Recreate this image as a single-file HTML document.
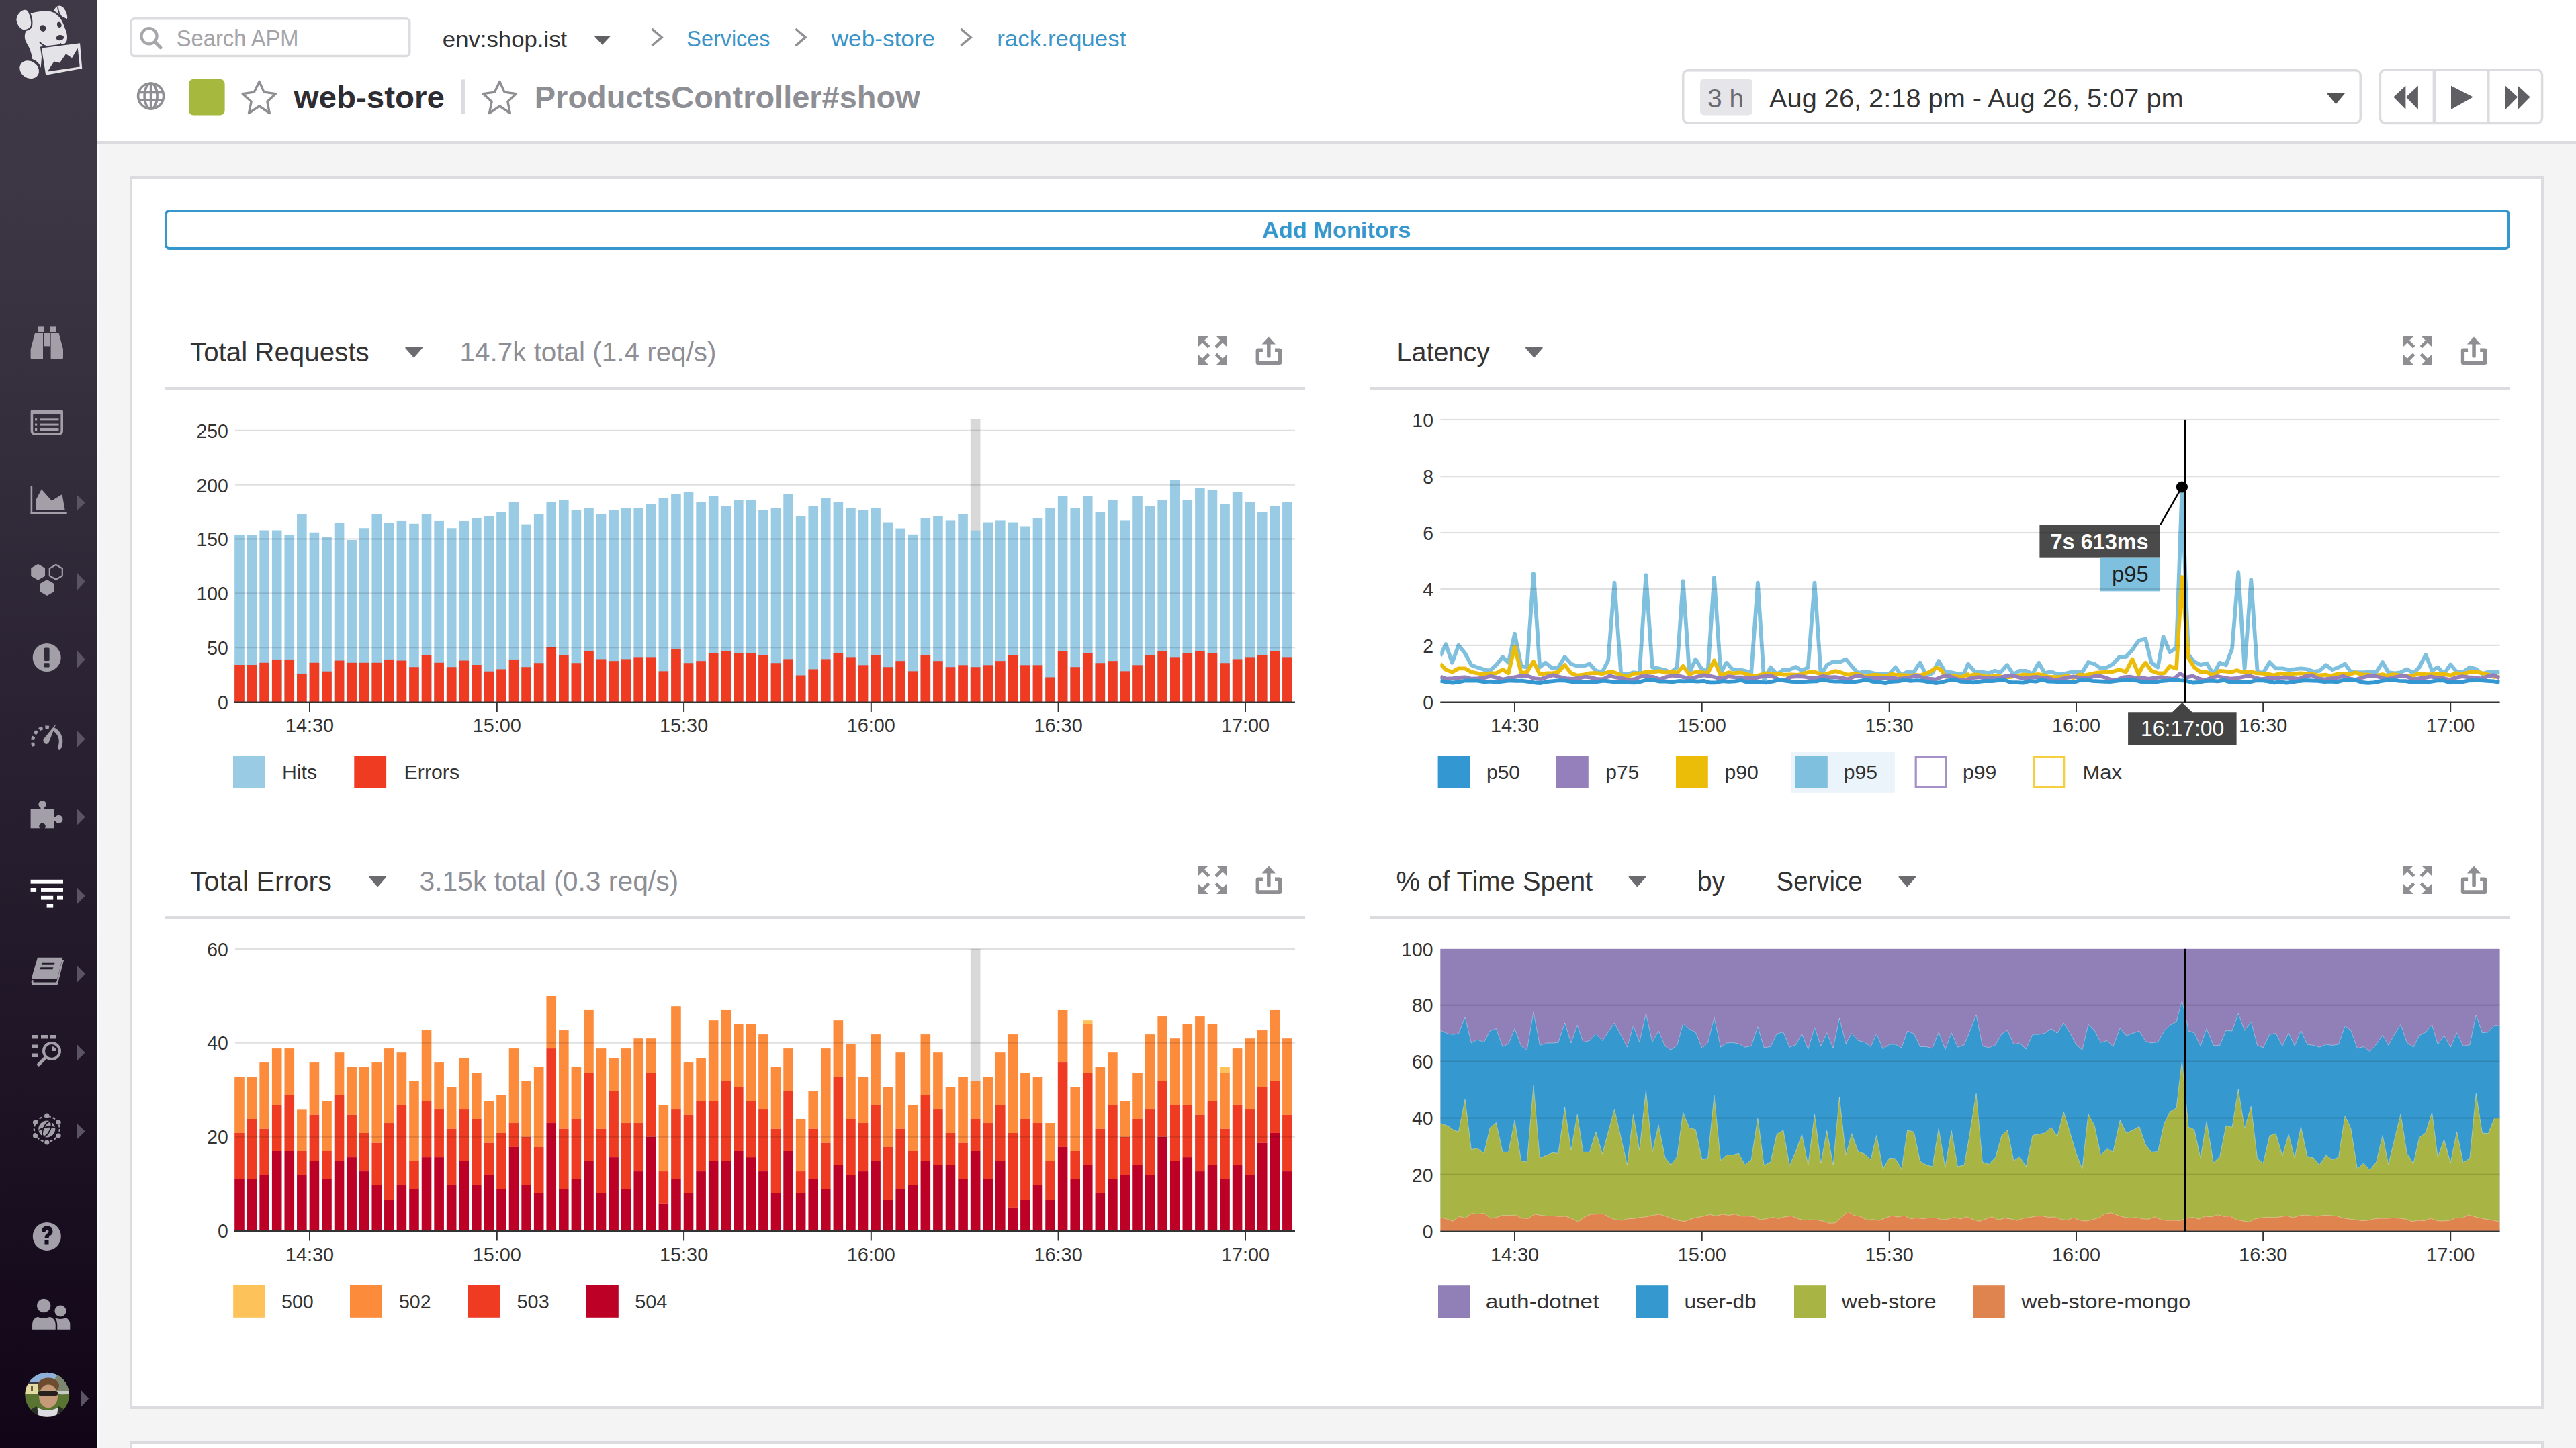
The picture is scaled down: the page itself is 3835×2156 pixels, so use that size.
<!DOCTYPE html>
<html><head><meta charset="utf-8"><title>web-store | ProductsController#show</title>
<style>html,body{margin:0;padding:0;width:3835px;height:2156px;overflow:hidden;background:#f4f4f5}svg{display:block}text{font-family:"Liberation Sans", sans-serif}</style>
</head><body>
<svg width="3835" height="2156" viewBox="0 0 3835 2156">
<rect x="0.00" y="0.00" width="3835.00" height="2156.00" fill="#f4f4f5"/>
<rect x="145.00" y="0.00" width="3690.00" height="210.00" fill="#ffffff"/>
<rect x="145.00" y="210.00" width="3690.00" height="4.00" fill="#dcdce0"/>
<rect x="193.00" y="262.00" width="3594.00" height="1836.00" fill="#dcdce0"/>
<rect x="197.00" y="266.00" width="3586.00" height="1828.00" fill="#ffffff"/>
<rect x="193.00" y="2146.00" width="3594.00" height="20.00" fill="#dcdce0"/>
<rect x="197.00" y="2150.00" width="3586.00" height="20.00" fill="#ffffff"/>
<defs><linearGradient id="sbg" x1="0" y1="0" x2="0" y2="1"><stop offset="0" stop-color="#3f3947"/><stop offset="0.12" stop-color="#3d3745"/><stop offset="0.5" stop-color="#2a2232"/><stop offset="1" stop-color="#110517"/></linearGradient><radialGradient id="avg" cx="0.5" cy="0.45" r="0.6"><stop offset="0" stop-color="#d9a98a"/><stop offset="0.45" stop-color="#b88a6a"/><stop offset="0.7" stop-color="#6d8a3a"/><stop offset="1" stop-color="#4a6a2a"/></radialGradient></defs>
<rect x="0.00" y="0.00" width="145.00" height="2156.00" fill="url(#sbg)"/>
<rect x="145.00" y="214.00" width="3.00" height="1942.00" fill="#ffffff" opacity="0.6"/>
<rect x="195.2" y="27.7" width="414.6" height="55.8" rx="5" fill="#fff" stroke="#dcdce0" stroke-width="3.4"/>
<circle cx="222" cy="53.7" r="11.6" fill="none" stroke="#a6a6ab" stroke-width="4.2"/>
<line x1="231" y1="62.7" x2="239" y2="70.7" stroke="#a6a6ab" stroke-width="5" stroke-linecap="round"/>
<text x="262.8" y="69.0" font-size="35" fill="#a3a3a8" font-weight="400" text-anchor="start" textLength="181.7" lengthAdjust="spacingAndGlyphs">Search APM</text>
<text x="658.8" y="69.5" font-size="34" fill="#333" font-weight="400" text-anchor="start" textLength="185.5" lengthAdjust="spacingAndGlyphs">env:shop.ist</text>
<path d="M886 54 L907.5 54 L896.7 65.5 Z" fill="#616165" stroke="#616165" stroke-width="1.8" stroke-linejoin="round"/>
<path d="M970.5 43 L985.0 55.5 L970.5 68" fill="none" stroke="#909095" stroke-width="3.6"/>
<path d="M1184.5 43 L1199.0 55.5 L1184.5 68" fill="none" stroke="#909095" stroke-width="3.6"/>
<path d="M1430.5 43 L1445.0 55.5 L1430.5 68" fill="none" stroke="#909095" stroke-width="3.6"/>
<text x="1022.3" y="69.0" font-size="34" fill="#3a94c8" font-weight="400" text-anchor="start" textLength="124.2" lengthAdjust="spacingAndGlyphs">Services</text>
<text x="1237.7" y="69.0" font-size="34" fill="#3a94c8" font-weight="400" text-anchor="start" textLength="154.5" lengthAdjust="spacingAndGlyphs">web-store</text>
<text x="1484.2" y="69.0" font-size="34" fill="#3a94c8" font-weight="400" text-anchor="start" textLength="192.2" lengthAdjust="spacingAndGlyphs">rack.request</text>
<g fill="none" stroke="#8e8e93" stroke-width="3.6"><circle cx="224.6" cy="143" r="19"/><ellipse cx="224.6" cy="143" rx="9.5" ry="19"/><line x1="224.6" y1="124" x2="224.6" y2="162"/><line x1="207" y1="137.5" x2="242" y2="137.5"/><line x1="207" y1="149" x2="242" y2="149"/></g>
<rect x="281" y="117.8" width="53.6" height="53.8" rx="7" fill="#a6b83e"/>
<polygon points="386.0,121.4 393.0,137.1 410.5,139.6 397.9,151.3 401.3,168.5 386.0,158.0 370.5,168.5 374.1,151.3 361.1,139.6 378.4,137.1" fill="none" stroke="#8e8e93" stroke-width="3.4" stroke-linejoin="round"/>
<polygon points="744.0,121.4 751.0,137.1 768.5,139.6 755.9,151.3 759.3,168.5 744.0,158.0 728.5,168.5 732.1,151.3 719.1,139.6 736.4,137.1" fill="none" stroke="#8e8e93" stroke-width="3.4" stroke-linejoin="round"/>
<text x="437.5" y="161.0" font-size="46" fill="#2d2d33" font-weight="700" text-anchor="start" textLength="224.4" lengthAdjust="spacingAndGlyphs">web-store</text>
<rect x="686.30" y="118.40" width="6.50" height="51.20" fill="#dcdce0"/>
<text x="795.8" y="161.0" font-size="46" fill="#8e8e95" font-weight="700" text-anchor="start" textLength="573.9" lengthAdjust="spacingAndGlyphs">ProductsController#show</text>
<rect x="2505.7" y="104.7" width="1008.5" height="78" rx="7" fill="#fff" stroke="#dcdce0" stroke-width="3.5"/>
<rect x="2531" y="117.4" width="78" height="54" rx="6" fill="#e6e6ea"/>
<text x="2542.0" y="160.3" font-size="38" fill="#6a6a70" font-weight="400" text-anchor="start" textLength="54" lengthAdjust="spacingAndGlyphs">3 h</text>
<text x="2634.0" y="160.3" font-size="38" fill="#333" font-weight="400" text-anchor="start" textLength="616.7" lengthAdjust="spacingAndGlyphs">Aug 26, 2:18 pm - Aug 26, 5:07 pm</text>
<path d="M3465 139 L3490 139 L3477.5 154 Z" fill="#555" stroke="#555" stroke-width="1.5" stroke-linejoin="round"/>
<rect x="3543.4" y="103.8" width="241.2" height="79.7" rx="8" fill="#fff" stroke="#dcdce0" stroke-width="3.5"/>
<rect x="3621.60" y="105.00" width="4.50" height="78.00" fill="#dcdce0"/>
<rect x="3703.00" y="105.00" width="3.60" height="78.00" fill="#dcdce0"/>
<path d="M3563.3 144.5 L3581.4 127.8 L3581.4 163.1 Z M3581.9 144.5 L3599.9 127.8 L3599.9 163.1 Z" fill="#5f5f64"/>
<path d="M3649 127.8 L3681.9 144.5 L3649 163.1 Z" fill="#5f5f64"/>
<path d="M3730 127.8 L3748.2 144.5 L3730 163.1 Z M3748.5 127.8 L3766.6 144.5 L3748.5 163.1 Z" fill="#5f5f64"/>
<rect x="247" y="314" width="3488" height="56" rx="5" fill="#fff" stroke="#3597cc" stroke-width="4"/>
<text x="1879.0" y="354.2" font-size="34" fill="#3597cc" font-weight="700" text-anchor="start" textLength="221.3" lengthAdjust="spacingAndGlyphs">Add Monitors</text>
<text x="283.0" y="537.8" font-size="40" fill="#333" font-weight="400" text-anchor="start" textLength="266.6" lengthAdjust="spacingAndGlyphs">Total Requests</text>
<path d="M604 517.8 L628.3 517.8 L616.15 531.5 Z" fill="#6b6b70" stroke="#6b6b70" stroke-width="1.6" stroke-linejoin="round"/>
<text x="684.5" y="537.8" font-size="40" fill="#8e8e95" font-weight="400" text-anchor="start" textLength="382" lengthAdjust="spacingAndGlyphs">14.7k total (1.4 req/s)</text>
<g fill="#8e8e93"><polygon points="1784.00,501.00 1799.00,501.00 1793.15,506.85 1801.40,515.10 1798.10,518.40 1789.85,510.15 1784.00,516.00"/><polygon points="1826.00,501.00 1811.00,501.00 1816.85,506.85 1808.60,515.10 1811.90,518.40 1820.15,510.15 1826.00,516.00"/><polygon points="1784.00,543.00 1799.00,543.00 1793.15,537.15 1801.40,528.90 1798.10,525.60 1789.85,533.85 1784.00,528.00"/><polygon points="1826.00,543.00 1811.00,543.00 1816.85,537.15 1808.60,528.90 1811.90,525.60 1820.15,533.85 1826.00,528.00"/></g>
<g fill="#8e8e93"><path d="M1879.8999999999999 518.5 H1873.1 Q1869.6 518.5 1869.6 522 V539.5 Q1869.6 543 1873.1 543 H1904.8 Q1908.3 543 1908.3 539.5 V522 Q1908.3 518.5 1904.8 518.5 H1898.0 V524 H1902.8 V537.3 H1874.8999999999999 V524 H1879.8999999999999 Z"/><path d="M1888.8 501.4 L1898.8999999999999 512.6 H1891.6 V530.5 Q1891.6 532.5 1888.85 532.5 Q1886.1 532.5 1886.1 530.5 V512.6 H1878.6 Z"/></g>
<rect x="245.00" y="576.00" width="1698.00" height="4.00" fill="#dcdce0"/>
<text x="2079.5" y="537.8" font-size="40" fill="#333" font-weight="400" text-anchor="start" textLength="138.4" lengthAdjust="spacingAndGlyphs">Latency</text>
<path d="M2271.7 517.8 L2296.0 517.8 L2283.85 531.5 Z" fill="#6b6b70" stroke="#6b6b70" stroke-width="1.6" stroke-linejoin="round"/>
<g fill="#8e8e93"><polygon points="3578.00,501.00 3593.00,501.00 3587.15,506.85 3595.40,515.10 3592.10,518.40 3583.85,510.15 3578.00,516.00"/><polygon points="3620.00,501.00 3605.00,501.00 3610.85,506.85 3602.60,515.10 3605.90,518.40 3614.15,510.15 3620.00,516.00"/><polygon points="3578.00,543.00 3593.00,543.00 3587.15,537.15 3595.40,528.90 3592.10,525.60 3583.85,533.85 3578.00,528.00"/><polygon points="3620.00,543.00 3605.00,543.00 3610.85,537.15 3602.60,528.90 3605.90,525.60 3614.15,533.85 3620.00,528.00"/></g>
<g fill="#8e8e93"><path d="M3674.1000000000004 518.5 H3667.3 Q3663.8 518.5 3663.8 522 V539.5 Q3663.8 543 3667.3 543 H3699.0 Q3702.5 543 3702.5 539.5 V522 Q3702.5 518.5 3699.0 518.5 H3692.2000000000003 V524 H3697.0 V537.3 H3669.1000000000004 V524 H3674.1000000000004 Z"/><path d="M3683.0 501.4 L3693.1000000000004 512.6 H3685.8 V530.5 Q3685.8 532.5 3683.05 532.5 Q3680.3 532.5 3680.3 530.5 V512.6 H3672.8 Z"/></g>
<rect x="2039.00" y="576.00" width="1698.00" height="4.00" fill="#dcdce0"/>
<text x="282.9" y="1325.8" font-size="40" fill="#333" font-weight="400" text-anchor="start" textLength="211" lengthAdjust="spacingAndGlyphs">Total Errors</text>
<path d="M550 1305.8 L574.3 1305.8 L562.15 1319.5 Z" fill="#6b6b70" stroke="#6b6b70" stroke-width="1.6" stroke-linejoin="round"/>
<text x="624.5" y="1325.8" font-size="40" fill="#8e8e95" font-weight="400" text-anchor="start" textLength="385.7" lengthAdjust="spacingAndGlyphs">3.15k total (0.3 req/s)</text>
<g fill="#8e8e93"><polygon points="1784.00,1289.00 1799.00,1289.00 1793.15,1294.85 1801.40,1303.10 1798.10,1306.40 1789.85,1298.15 1784.00,1304.00"/><polygon points="1826.00,1289.00 1811.00,1289.00 1816.85,1294.85 1808.60,1303.10 1811.90,1306.40 1820.15,1298.15 1826.00,1304.00"/><polygon points="1784.00,1331.00 1799.00,1331.00 1793.15,1325.15 1801.40,1316.90 1798.10,1313.60 1789.85,1321.85 1784.00,1316.00"/><polygon points="1826.00,1331.00 1811.00,1331.00 1816.85,1325.15 1808.60,1316.90 1811.90,1313.60 1820.15,1321.85 1826.00,1316.00"/></g>
<g fill="#8e8e93"><path d="M1879.8999999999999 1306.5 H1873.1 Q1869.6 1306.5 1869.6 1310 V1327.5 Q1869.6 1331 1873.1 1331 H1904.8 Q1908.3 1331 1908.3 1327.5 V1310 Q1908.3 1306.5 1904.8 1306.5 H1898.0 V1312 H1902.8 V1325.3 H1874.8999999999999 V1312 H1879.8999999999999 Z"/><path d="M1888.8 1289.4 L1898.8999999999999 1300.6 H1891.6 V1318.5 Q1891.6 1320.5 1888.85 1320.5 Q1886.1 1320.5 1886.1 1318.5 V1300.6 H1878.6 Z"/></g>
<rect x="245.00" y="1364.00" width="1698.00" height="4.00" fill="#dcdce0"/>
<text x="2078.4" y="1325.7" font-size="40" fill="#333" font-weight="400" text-anchor="start" textLength="292.8" lengthAdjust="spacingAndGlyphs">% of Time Spent</text>
<path d="M2425.3 1305.8 L2449.6000000000004 1305.8 L2437.4500000000003 1319.5 Z" fill="#6b6b70" stroke="#6b6b70" stroke-width="1.6" stroke-linejoin="round"/>
<text x="2526.7" y="1325.7" font-size="40" fill="#333" font-weight="400" text-anchor="start" textLength="41.6" lengthAdjust="spacingAndGlyphs">by</text>
<text x="2644.5" y="1325.7" font-size="40" fill="#333" font-weight="400" text-anchor="start" textLength="128.2" lengthAdjust="spacingAndGlyphs">Service</text>
<path d="M2827.2 1305.8 L2851.5 1305.8 L2839.35 1319.5 Z" fill="#6b6b70" stroke="#6b6b70" stroke-width="1.6" stroke-linejoin="round"/>
<g fill="#8e8e93"><polygon points="3578.00,1289.00 3593.00,1289.00 3587.15,1294.85 3595.40,1303.10 3592.10,1306.40 3583.85,1298.15 3578.00,1304.00"/><polygon points="3620.00,1289.00 3605.00,1289.00 3610.85,1294.85 3602.60,1303.10 3605.90,1306.40 3614.15,1298.15 3620.00,1304.00"/><polygon points="3578.00,1331.00 3593.00,1331.00 3587.15,1325.15 3595.40,1316.90 3592.10,1313.60 3583.85,1321.85 3578.00,1316.00"/><polygon points="3620.00,1331.00 3605.00,1331.00 3610.85,1325.15 3602.60,1316.90 3605.90,1313.60 3614.15,1321.85 3620.00,1316.00"/></g>
<g fill="#8e8e93"><path d="M3674.1000000000004 1306.5 H3667.3 Q3663.8 1306.5 3663.8 1310 V1327.5 Q3663.8 1331 3667.3 1331 H3699.0 Q3702.5 1331 3702.5 1327.5 V1310 Q3702.5 1306.5 3699.0 1306.5 H3692.2000000000003 V1312 H3697.0 V1325.3 H3669.1000000000004 V1312 H3674.1000000000004 Z"/><path d="M3683.0 1289.4 L3693.1000000000004 1300.6 H3685.8 V1318.5 Q3685.8 1320.5 3683.05 1320.5 Q3680.3 1320.5 3680.3 1318.5 V1300.6 H3672.8 Z"/></g>
<rect x="2039.00" y="1364.00" width="1698.00" height="4.00" fill="#dcdce0"/>
<rect x="1444.83" y="624.00" width="14.60" height="421.00" fill="#d8d8d8"/>
<rect x="349.20" y="795.95" width="14.60" height="249.05" fill="#99cbe5"/>
<rect x="349.20" y="990.02" width="14.60" height="54.98" fill="#ef3b22"/>
<rect x="367.77" y="795.95" width="14.60" height="249.05" fill="#99cbe5"/>
<rect x="367.77" y="990.02" width="14.60" height="54.98" fill="#ef3b22"/>
<rect x="386.34" y="789.48" width="14.60" height="255.52" fill="#99cbe5"/>
<rect x="386.34" y="986.78" width="14.60" height="58.22" fill="#ef3b22"/>
<rect x="404.91" y="789.48" width="14.60" height="255.52" fill="#99cbe5"/>
<rect x="404.91" y="981.93" width="14.60" height="63.07" fill="#ef3b22"/>
<rect x="423.48" y="795.95" width="14.60" height="249.05" fill="#99cbe5"/>
<rect x="423.48" y="981.93" width="14.60" height="63.07" fill="#ef3b22"/>
<rect x="442.05" y="765.22" width="14.60" height="279.78" fill="#99cbe5"/>
<rect x="442.05" y="1002.95" width="14.60" height="42.05" fill="#ef3b22"/>
<rect x="460.62" y="792.72" width="14.60" height="252.28" fill="#99cbe5"/>
<rect x="460.62" y="986.78" width="14.60" height="58.22" fill="#ef3b22"/>
<rect x="479.19" y="799.19" width="14.60" height="245.81" fill="#99cbe5"/>
<rect x="479.19" y="999.72" width="14.60" height="45.28" fill="#ef3b22"/>
<rect x="497.76" y="778.16" width="14.60" height="266.84" fill="#99cbe5"/>
<rect x="497.76" y="983.55" width="14.60" height="61.45" fill="#ef3b22"/>
<rect x="516.33" y="804.04" width="14.60" height="240.96" fill="#99cbe5"/>
<rect x="516.33" y="986.78" width="14.60" height="58.22" fill="#ef3b22"/>
<rect x="534.90" y="786.25" width="14.60" height="258.75" fill="#99cbe5"/>
<rect x="534.90" y="986.78" width="14.60" height="58.22" fill="#ef3b22"/>
<rect x="553.47" y="765.22" width="14.60" height="279.78" fill="#99cbe5"/>
<rect x="553.47" y="986.78" width="14.60" height="58.22" fill="#ef3b22"/>
<rect x="572.04" y="778.16" width="14.60" height="266.84" fill="#99cbe5"/>
<rect x="572.04" y="981.93" width="14.60" height="63.07" fill="#ef3b22"/>
<rect x="590.61" y="774.93" width="14.60" height="270.07" fill="#99cbe5"/>
<rect x="590.61" y="983.55" width="14.60" height="61.45" fill="#ef3b22"/>
<rect x="609.18" y="779.78" width="14.60" height="265.22" fill="#99cbe5"/>
<rect x="609.18" y="993.25" width="14.60" height="51.75" fill="#ef3b22"/>
<rect x="627.75" y="765.22" width="14.60" height="279.78" fill="#99cbe5"/>
<rect x="627.75" y="975.46" width="14.60" height="69.54" fill="#ef3b22"/>
<rect x="646.32" y="774.93" width="14.60" height="270.07" fill="#99cbe5"/>
<rect x="646.32" y="986.78" width="14.60" height="58.22" fill="#ef3b22"/>
<rect x="664.89" y="786.25" width="14.60" height="258.75" fill="#99cbe5"/>
<rect x="664.89" y="993.25" width="14.60" height="51.75" fill="#ef3b22"/>
<rect x="683.46" y="774.93" width="14.60" height="270.07" fill="#99cbe5"/>
<rect x="683.46" y="983.55" width="14.60" height="61.45" fill="#ef3b22"/>
<rect x="702.03" y="771.69" width="14.60" height="273.31" fill="#99cbe5"/>
<rect x="702.03" y="990.02" width="14.60" height="54.98" fill="#ef3b22"/>
<rect x="720.60" y="768.46" width="14.60" height="276.54" fill="#99cbe5"/>
<rect x="720.60" y="999.72" width="14.60" height="45.28" fill="#ef3b22"/>
<rect x="739.17" y="762.64" width="14.60" height="282.36" fill="#99cbe5"/>
<rect x="739.17" y="996.48" width="14.60" height="48.52" fill="#ef3b22"/>
<rect x="757.74" y="747.44" width="14.60" height="297.56" fill="#99cbe5"/>
<rect x="757.74" y="981.93" width="14.60" height="63.07" fill="#ef3b22"/>
<rect x="776.31" y="780.59" width="14.60" height="264.41" fill="#99cbe5"/>
<rect x="776.31" y="993.25" width="14.60" height="51.75" fill="#ef3b22"/>
<rect x="794.88" y="765.71" width="14.60" height="279.29" fill="#99cbe5"/>
<rect x="794.88" y="987.27" width="14.60" height="57.73" fill="#ef3b22"/>
<rect x="813.45" y="747.44" width="14.60" height="297.56" fill="#99cbe5"/>
<rect x="813.45" y="963.17" width="14.60" height="81.83" fill="#ef3b22"/>
<rect x="832.02" y="744.20" width="14.60" height="300.80" fill="#99cbe5"/>
<rect x="832.02" y="975.46" width="14.60" height="69.54" fill="#ef3b22"/>
<rect x="850.59" y="759.56" width="14.60" height="285.44" fill="#99cbe5"/>
<rect x="850.59" y="987.27" width="14.60" height="57.73" fill="#ef3b22"/>
<rect x="869.16" y="756.49" width="14.60" height="288.51" fill="#99cbe5"/>
<rect x="869.16" y="969.32" width="14.60" height="75.68" fill="#ef3b22"/>
<rect x="887.73" y="765.71" width="14.60" height="279.29" fill="#99cbe5"/>
<rect x="887.73" y="981.44" width="14.60" height="63.56" fill="#ef3b22"/>
<rect x="906.30" y="759.56" width="14.60" height="285.44" fill="#99cbe5"/>
<rect x="906.30" y="984.19" width="14.60" height="60.81" fill="#ef3b22"/>
<rect x="924.87" y="756.49" width="14.60" height="288.51" fill="#99cbe5"/>
<rect x="924.87" y="981.44" width="14.60" height="63.56" fill="#ef3b22"/>
<rect x="943.44" y="756.49" width="14.60" height="288.51" fill="#99cbe5"/>
<rect x="943.44" y="978.37" width="14.60" height="66.63" fill="#ef3b22"/>
<rect x="962.01" y="750.67" width="14.60" height="294.33" fill="#99cbe5"/>
<rect x="962.01" y="978.37" width="14.60" height="66.63" fill="#ef3b22"/>
<rect x="980.58" y="741.29" width="14.60" height="303.71" fill="#99cbe5"/>
<rect x="980.58" y="999.39" width="14.60" height="45.61" fill="#ef3b22"/>
<rect x="999.15" y="735.31" width="14.60" height="309.69" fill="#99cbe5"/>
<rect x="999.15" y="966.24" width="14.60" height="78.76" fill="#ef3b22"/>
<rect x="1017.72" y="732.56" width="14.60" height="312.44" fill="#99cbe5"/>
<rect x="1017.72" y="987.27" width="14.60" height="57.73" fill="#ef3b22"/>
<rect x="1036.29" y="747.44" width="14.60" height="297.56" fill="#99cbe5"/>
<rect x="1036.29" y="984.19" width="14.60" height="60.81" fill="#ef3b22"/>
<rect x="1054.86" y="738.22" width="14.60" height="306.78" fill="#99cbe5"/>
<rect x="1054.86" y="972.23" width="14.60" height="72.77" fill="#ef3b22"/>
<rect x="1073.43" y="753.42" width="14.60" height="291.58" fill="#99cbe5"/>
<rect x="1073.43" y="969.32" width="14.60" height="75.68" fill="#ef3b22"/>
<rect x="1092.00" y="744.20" width="14.60" height="300.80" fill="#99cbe5"/>
<rect x="1092.00" y="972.23" width="14.60" height="72.77" fill="#ef3b22"/>
<rect x="1110.57" y="744.20" width="14.60" height="300.80" fill="#99cbe5"/>
<rect x="1110.57" y="972.23" width="14.60" height="72.77" fill="#ef3b22"/>
<rect x="1129.14" y="759.56" width="14.60" height="285.44" fill="#99cbe5"/>
<rect x="1129.14" y="975.46" width="14.60" height="69.54" fill="#ef3b22"/>
<rect x="1147.71" y="756.49" width="14.60" height="288.51" fill="#99cbe5"/>
<rect x="1147.71" y="987.27" width="14.60" height="57.73" fill="#ef3b22"/>
<rect x="1166.28" y="735.31" width="14.60" height="309.69" fill="#99cbe5"/>
<rect x="1166.28" y="981.44" width="14.60" height="63.56" fill="#ef3b22"/>
<rect x="1184.85" y="768.62" width="14.60" height="276.38" fill="#99cbe5"/>
<rect x="1184.85" y="1005.54" width="14.60" height="39.46" fill="#ef3b22"/>
<rect x="1203.42" y="753.42" width="14.60" height="291.58" fill="#99cbe5"/>
<rect x="1203.42" y="996.48" width="14.60" height="48.52" fill="#ef3b22"/>
<rect x="1221.99" y="741.29" width="14.60" height="303.71" fill="#99cbe5"/>
<rect x="1221.99" y="981.44" width="14.60" height="63.56" fill="#ef3b22"/>
<rect x="1240.56" y="747.44" width="14.60" height="297.56" fill="#99cbe5"/>
<rect x="1240.56" y="972.23" width="14.60" height="72.77" fill="#ef3b22"/>
<rect x="1259.13" y="756.49" width="14.60" height="288.51" fill="#99cbe5"/>
<rect x="1259.13" y="978.37" width="14.60" height="66.63" fill="#ef3b22"/>
<rect x="1277.70" y="759.56" width="14.60" height="285.44" fill="#99cbe5"/>
<rect x="1277.70" y="990.34" width="14.60" height="54.66" fill="#ef3b22"/>
<rect x="1296.27" y="756.49" width="14.60" height="288.51" fill="#99cbe5"/>
<rect x="1296.27" y="975.46" width="14.60" height="69.54" fill="#ef3b22"/>
<rect x="1314.84" y="777.52" width="14.60" height="267.48" fill="#99cbe5"/>
<rect x="1314.84" y="993.25" width="14.60" height="51.75" fill="#ef3b22"/>
<rect x="1333.41" y="786.57" width="14.60" height="258.43" fill="#99cbe5"/>
<rect x="1333.41" y="984.19" width="14.60" height="60.81" fill="#ef3b22"/>
<rect x="1351.98" y="795.79" width="14.60" height="249.21" fill="#99cbe5"/>
<rect x="1351.98" y="999.39" width="14.60" height="45.61" fill="#ef3b22"/>
<rect x="1370.55" y="771.37" width="14.60" height="273.63" fill="#99cbe5"/>
<rect x="1370.55" y="975.46" width="14.60" height="69.54" fill="#ef3b22"/>
<rect x="1389.12" y="768.62" width="14.60" height="276.38" fill="#99cbe5"/>
<rect x="1389.12" y="984.19" width="14.60" height="60.81" fill="#ef3b22"/>
<rect x="1407.69" y="774.44" width="14.60" height="270.56" fill="#99cbe5"/>
<rect x="1407.69" y="993.25" width="14.60" height="51.75" fill="#ef3b22"/>
<rect x="1426.26" y="765.71" width="14.60" height="279.29" fill="#99cbe5"/>
<rect x="1426.26" y="990.34" width="14.60" height="54.66" fill="#ef3b22"/>
<rect x="1444.83" y="789.64" width="14.60" height="255.36" fill="#99cbe5"/>
<rect x="1444.83" y="993.25" width="14.60" height="51.75" fill="#ef3b22"/>
<rect x="1463.40" y="777.52" width="14.60" height="267.48" fill="#99cbe5"/>
<rect x="1463.40" y="990.34" width="14.60" height="54.66" fill="#ef3b22"/>
<rect x="1481.97" y="774.44" width="14.60" height="270.56" fill="#99cbe5"/>
<rect x="1481.97" y="984.19" width="14.60" height="60.81" fill="#ef3b22"/>
<rect x="1500.54" y="777.52" width="14.60" height="267.48" fill="#99cbe5"/>
<rect x="1500.54" y="975.46" width="14.60" height="69.54" fill="#ef3b22"/>
<rect x="1519.11" y="783.50" width="14.60" height="261.50" fill="#99cbe5"/>
<rect x="1519.11" y="990.34" width="14.60" height="54.66" fill="#ef3b22"/>
<rect x="1537.68" y="771.37" width="14.60" height="273.63" fill="#99cbe5"/>
<rect x="1537.68" y="990.34" width="14.60" height="54.66" fill="#ef3b22"/>
<rect x="1556.25" y="756.49" width="14.60" height="288.51" fill="#99cbe5"/>
<rect x="1556.25" y="1008.45" width="14.60" height="36.55" fill="#ef3b22"/>
<rect x="1574.82" y="738.22" width="14.60" height="306.78" fill="#99cbe5"/>
<rect x="1574.82" y="969.32" width="14.60" height="75.68" fill="#ef3b22"/>
<rect x="1593.39" y="756.49" width="14.60" height="288.51" fill="#99cbe5"/>
<rect x="1593.39" y="993.25" width="14.60" height="51.75" fill="#ef3b22"/>
<rect x="1611.96" y="738.22" width="14.60" height="306.78" fill="#99cbe5"/>
<rect x="1611.96" y="972.23" width="14.60" height="72.77" fill="#ef3b22"/>
<rect x="1630.53" y="762.64" width="14.60" height="282.36" fill="#99cbe5"/>
<rect x="1630.53" y="987.27" width="14.60" height="57.73" fill="#ef3b22"/>
<rect x="1649.10" y="744.20" width="14.60" height="300.80" fill="#99cbe5"/>
<rect x="1649.10" y="984.19" width="14.60" height="60.81" fill="#ef3b22"/>
<rect x="1667.67" y="774.44" width="14.60" height="270.56" fill="#99cbe5"/>
<rect x="1667.67" y="999.39" width="14.60" height="45.61" fill="#ef3b22"/>
<rect x="1686.24" y="738.22" width="14.60" height="306.78" fill="#99cbe5"/>
<rect x="1686.24" y="990.34" width="14.60" height="54.66" fill="#ef3b22"/>
<rect x="1704.81" y="753.42" width="14.60" height="291.58" fill="#99cbe5"/>
<rect x="1704.81" y="975.46" width="14.60" height="69.54" fill="#ef3b22"/>
<rect x="1723.38" y="744.20" width="14.60" height="300.80" fill="#99cbe5"/>
<rect x="1723.38" y="969.32" width="14.60" height="75.68" fill="#ef3b22"/>
<rect x="1741.95" y="714.61" width="14.60" height="330.39" fill="#99cbe5"/>
<rect x="1741.95" y="978.37" width="14.60" height="66.63" fill="#ef3b22"/>
<rect x="1760.52" y="744.20" width="14.60" height="300.80" fill="#99cbe5"/>
<rect x="1760.52" y="972.23" width="14.60" height="72.77" fill="#ef3b22"/>
<rect x="1779.09" y="726.41" width="14.60" height="318.59" fill="#99cbe5"/>
<rect x="1779.09" y="969.32" width="14.60" height="75.68" fill="#ef3b22"/>
<rect x="1797.66" y="729.48" width="14.60" height="315.52" fill="#99cbe5"/>
<rect x="1797.66" y="972.23" width="14.60" height="72.77" fill="#ef3b22"/>
<rect x="1816.23" y="750.51" width="14.60" height="294.49" fill="#99cbe5"/>
<rect x="1816.23" y="987.27" width="14.60" height="57.73" fill="#ef3b22"/>
<rect x="1834.80" y="732.56" width="14.60" height="312.44" fill="#99cbe5"/>
<rect x="1834.80" y="981.44" width="14.60" height="63.56" fill="#ef3b22"/>
<rect x="1853.37" y="747.44" width="14.60" height="297.56" fill="#99cbe5"/>
<rect x="1853.37" y="978.37" width="14.60" height="66.63" fill="#ef3b22"/>
<rect x="1871.94" y="762.64" width="14.60" height="282.36" fill="#99cbe5"/>
<rect x="1871.94" y="975.46" width="14.60" height="69.54" fill="#ef3b22"/>
<rect x="1890.51" y="753.42" width="14.60" height="291.58" fill="#99cbe5"/>
<rect x="1890.51" y="969.32" width="14.60" height="75.68" fill="#ef3b22"/>
<rect x="1909.08" y="747.44" width="14.60" height="297.56" fill="#99cbe5"/>
<rect x="1909.08" y="978.37" width="14.60" height="66.63" fill="#ef3b22"/>
<rect x="350.00" y="639.70" width="1578.00" height="2.20" fill="rgba(0,0,0,0.12)"/>
<rect x="350.00" y="720.60" width="1578.00" height="2.20" fill="rgba(0,0,0,0.12)"/>
<rect x="350.00" y="801.40" width="1578.00" height="2.20" fill="rgba(0,0,0,0.12)"/>
<rect x="350.00" y="882.30" width="1578.00" height="2.20" fill="rgba(0,0,0,0.12)"/>
<rect x="350.00" y="963.10" width="1578.00" height="2.20" fill="rgba(0,0,0,0.12)"/>
<text x="339.7" y="651.6" font-size="30" fill="#333" font-weight="400" text-anchor="end" textLength="47.31" lengthAdjust="spacingAndGlyphs">250</text>
<text x="339.7" y="732.5" font-size="30" fill="#333" font-weight="400" text-anchor="end" textLength="47.31" lengthAdjust="spacingAndGlyphs">200</text>
<text x="339.7" y="813.2" font-size="30" fill="#333" font-weight="400" text-anchor="end" textLength="47.31" lengthAdjust="spacingAndGlyphs">150</text>
<text x="339.7" y="894.1" font-size="30" fill="#333" font-weight="400" text-anchor="end" textLength="47.31" lengthAdjust="spacingAndGlyphs">100</text>
<text x="339.7" y="975.0" font-size="30" fill="#333" font-weight="400" text-anchor="end" textLength="31.54" lengthAdjust="spacingAndGlyphs">50</text>
<text x="339.7" y="1055.8" font-size="30" fill="#333" font-weight="400" text-anchor="end" textLength="15.77" lengthAdjust="spacingAndGlyphs">0</text>
<rect x="349.00" y="1044.50" width="1579.00" height="2.00" fill="#333"/>
<rect x="460.00" y="1045.50" width="2.00" height="14.50" fill="#333"/>
<text x="461.0" y="1089.7" font-size="30" fill="#333" font-weight="400" text-anchor="middle" textLength="72.17999999999999" lengthAdjust="spacingAndGlyphs">14:30</text>
<rect x="738.80" y="1045.50" width="2.00" height="14.50" fill="#333"/>
<text x="739.8" y="1089.7" font-size="30" fill="#333" font-weight="400" text-anchor="middle" textLength="72.17999999999999" lengthAdjust="spacingAndGlyphs">15:00</text>
<rect x="1017.10" y="1045.50" width="2.00" height="14.50" fill="#333"/>
<text x="1018.1" y="1089.7" font-size="30" fill="#333" font-weight="400" text-anchor="middle" textLength="72.17999999999999" lengthAdjust="spacingAndGlyphs">15:30</text>
<rect x="1295.80" y="1045.50" width="2.00" height="14.50" fill="#333"/>
<text x="1296.8" y="1089.7" font-size="30" fill="#333" font-weight="400" text-anchor="middle" textLength="72.17999999999999" lengthAdjust="spacingAndGlyphs">16:00</text>
<rect x="1574.60" y="1045.50" width="2.00" height="14.50" fill="#333"/>
<text x="1575.6" y="1089.7" font-size="30" fill="#333" font-weight="400" text-anchor="middle" textLength="72.17999999999999" lengthAdjust="spacingAndGlyphs">16:30</text>
<rect x="1853.00" y="1045.50" width="2.00" height="14.50" fill="#333"/>
<text x="1854.0" y="1089.7" font-size="30" fill="#333" font-weight="400" text-anchor="middle" textLength="72.17999999999999" lengthAdjust="spacingAndGlyphs">17:00</text>
<rect x="347.00" y="1126.00" width="47.80" height="47.80" fill="#99cbe5"/>
<text x="420.0" y="1159.5" font-size="30" fill="#333" font-weight="400" text-anchor="start" textLength="52.2" lengthAdjust="spacingAndGlyphs">Hits</text>
<rect x="527.30" y="1126.00" width="47.80" height="47.80" fill="#ef3b22"/>
<text x="601.6" y="1159.5" font-size="30" fill="#333" font-weight="400" text-anchor="start" textLength="82.5" lengthAdjust="spacingAndGlyphs">Errors</text>
<rect x="1444.83" y="1412.80" width="14.60" height="420.00" fill="#d8d8d8"/>
<rect x="349.20" y="1603.04" width="14.60" height="83.89" fill="#fd8b3c"/>
<rect x="349.20" y="1686.93" width="14.60" height="69.00" fill="#ef3b22"/>
<rect x="349.20" y="1755.93" width="14.60" height="76.67" fill="#bd0026"/>
<rect x="367.77" y="1603.04" width="14.60" height="62.92" fill="#fd8b3c"/>
<rect x="367.77" y="1665.96" width="14.60" height="89.97" fill="#ef3b22"/>
<rect x="367.77" y="1755.93" width="14.60" height="76.67" fill="#bd0026"/>
<rect x="386.34" y="1582.07" width="14.60" height="98.78" fill="#fd8b3c"/>
<rect x="386.34" y="1680.85" width="14.60" height="69.00" fill="#ef3b22"/>
<rect x="386.34" y="1749.85" width="14.60" height="82.75" fill="#bd0026"/>
<rect x="404.91" y="1561.09" width="14.60" height="83.89" fill="#fd8b3c"/>
<rect x="404.91" y="1644.98" width="14.60" height="69.00" fill="#ef3b22"/>
<rect x="404.91" y="1713.98" width="14.60" height="118.62" fill="#bd0026"/>
<rect x="423.48" y="1561.09" width="14.60" height="69.00" fill="#fd8b3c"/>
<rect x="423.48" y="1630.09" width="14.60" height="83.89" fill="#ef3b22"/>
<rect x="423.48" y="1713.98" width="14.60" height="118.62" fill="#bd0026"/>
<rect x="442.05" y="1651.37" width="14.60" height="62.61" fill="#fd8b3c"/>
<rect x="442.05" y="1713.98" width="14.60" height="35.87" fill="#ef3b22"/>
<rect x="442.05" y="1749.85" width="14.60" height="82.75" fill="#bd0026"/>
<rect x="460.62" y="1582.07" width="14.60" height="77.81" fill="#fd8b3c"/>
<rect x="460.62" y="1659.88" width="14.60" height="69.00" fill="#ef3b22"/>
<rect x="460.62" y="1728.88" width="14.60" height="103.72" fill="#bd0026"/>
<rect x="479.19" y="1639.21" width="14.60" height="74.77" fill="#fd8b3c"/>
<rect x="479.19" y="1713.98" width="14.60" height="41.95" fill="#ef3b22"/>
<rect x="479.19" y="1755.93" width="14.60" height="76.67" fill="#bd0026"/>
<rect x="497.76" y="1567.17" width="14.60" height="62.92" fill="#fd8b3c"/>
<rect x="497.76" y="1630.09" width="14.60" height="98.78" fill="#ef3b22"/>
<rect x="497.76" y="1728.88" width="14.60" height="103.72" fill="#bd0026"/>
<rect x="516.33" y="1588.15" width="14.60" height="71.73" fill="#fd8b3c"/>
<rect x="516.33" y="1659.88" width="14.60" height="63.22" fill="#ef3b22"/>
<rect x="516.33" y="1723.10" width="14.60" height="109.50" fill="#bd0026"/>
<rect x="534.90" y="1588.15" width="14.60" height="98.78" fill="#fd8b3c"/>
<rect x="534.90" y="1686.93" width="14.60" height="57.14" fill="#ef3b22"/>
<rect x="534.90" y="1744.07" width="14.60" height="88.53" fill="#bd0026"/>
<rect x="553.47" y="1582.07" width="14.60" height="119.76" fill="#fd8b3c"/>
<rect x="553.47" y="1701.82" width="14.60" height="62.92" fill="#ef3b22"/>
<rect x="553.47" y="1764.74" width="14.60" height="67.86" fill="#bd0026"/>
<rect x="572.04" y="1561.09" width="14.60" height="110.94" fill="#fd8b3c"/>
<rect x="572.04" y="1672.04" width="14.60" height="113.98" fill="#ef3b22"/>
<rect x="572.04" y="1786.02" width="14.60" height="46.58" fill="#bd0026"/>
<rect x="590.61" y="1567.17" width="14.60" height="77.81" fill="#fd8b3c"/>
<rect x="590.61" y="1644.98" width="14.60" height="119.76" fill="#ef3b22"/>
<rect x="590.61" y="1764.74" width="14.60" height="67.86" fill="#bd0026"/>
<rect x="609.18" y="1609.12" width="14.60" height="119.76" fill="#fd8b3c"/>
<rect x="609.18" y="1728.88" width="14.60" height="41.95" fill="#ef3b22"/>
<rect x="609.18" y="1770.82" width="14.60" height="61.78" fill="#bd0026"/>
<rect x="627.75" y="1534.04" width="14.60" height="105.17" fill="#fd8b3c"/>
<rect x="627.75" y="1639.21" width="14.60" height="83.89" fill="#ef3b22"/>
<rect x="627.75" y="1723.10" width="14.60" height="109.50" fill="#bd0026"/>
<rect x="646.32" y="1582.07" width="14.60" height="69.00" fill="#fd8b3c"/>
<rect x="646.32" y="1651.06" width="14.60" height="72.04" fill="#ef3b22"/>
<rect x="646.32" y="1723.10" width="14.60" height="109.50" fill="#bd0026"/>
<rect x="664.89" y="1618.24" width="14.60" height="62.61" fill="#fd8b3c"/>
<rect x="664.89" y="1680.85" width="14.60" height="83.89" fill="#ef3b22"/>
<rect x="664.89" y="1764.74" width="14.60" height="67.86" fill="#bd0026"/>
<rect x="683.46" y="1575.99" width="14.60" height="75.08" fill="#fd8b3c"/>
<rect x="683.46" y="1651.06" width="14.60" height="77.81" fill="#ef3b22"/>
<rect x="683.46" y="1728.88" width="14.60" height="103.72" fill="#bd0026"/>
<rect x="702.03" y="1597.26" width="14.60" height="68.69" fill="#fd8b3c"/>
<rect x="702.03" y="1665.96" width="14.60" height="98.78" fill="#ef3b22"/>
<rect x="702.03" y="1764.74" width="14.60" height="67.86" fill="#bd0026"/>
<rect x="720.60" y="1639.21" width="14.60" height="62.61" fill="#fd8b3c"/>
<rect x="720.60" y="1701.82" width="14.60" height="48.02" fill="#ef3b22"/>
<rect x="720.60" y="1749.85" width="14.60" height="82.75" fill="#bd0026"/>
<rect x="739.17" y="1630.09" width="14.60" height="56.84" fill="#fd8b3c"/>
<rect x="739.17" y="1686.93" width="14.60" height="83.89" fill="#ef3b22"/>
<rect x="739.17" y="1770.82" width="14.60" height="61.78" fill="#bd0026"/>
<rect x="757.74" y="1561.09" width="14.60" height="110.94" fill="#fd8b3c"/>
<rect x="757.74" y="1672.04" width="14.60" height="35.87" fill="#ef3b22"/>
<rect x="757.74" y="1707.90" width="14.60" height="124.70" fill="#bd0026"/>
<rect x="776.31" y="1609.12" width="14.60" height="83.59" fill="#fd8b3c"/>
<rect x="776.31" y="1692.71" width="14.60" height="72.04" fill="#ef3b22"/>
<rect x="776.31" y="1764.74" width="14.60" height="67.86" fill="#bd0026"/>
<rect x="794.88" y="1588.15" width="14.60" height="119.76" fill="#fd8b3c"/>
<rect x="794.88" y="1707.90" width="14.60" height="69.00" fill="#ef3b22"/>
<rect x="794.88" y="1776.90" width="14.60" height="55.70" fill="#bd0026"/>
<rect x="813.45" y="1482.98" width="14.60" height="78.12" fill="#fd8b3c"/>
<rect x="813.45" y="1561.09" width="14.60" height="110.94" fill="#ef3b22"/>
<rect x="813.45" y="1672.04" width="14.60" height="160.56" fill="#bd0026"/>
<rect x="832.02" y="1534.04" width="14.60" height="146.81" fill="#fd8b3c"/>
<rect x="832.02" y="1680.85" width="14.60" height="89.97" fill="#ef3b22"/>
<rect x="832.02" y="1770.82" width="14.60" height="61.78" fill="#bd0026"/>
<rect x="850.59" y="1588.15" width="14.60" height="77.81" fill="#fd8b3c"/>
<rect x="850.59" y="1665.96" width="14.60" height="89.97" fill="#ef3b22"/>
<rect x="850.59" y="1755.93" width="14.60" height="76.67" fill="#bd0026"/>
<rect x="869.16" y="1503.95" width="14.60" height="93.31" fill="#fd8b3c"/>
<rect x="869.16" y="1597.26" width="14.60" height="131.61" fill="#ef3b22"/>
<rect x="869.16" y="1728.88" width="14.60" height="103.72" fill="#bd0026"/>
<rect x="887.73" y="1561.09" width="14.60" height="119.76" fill="#fd8b3c"/>
<rect x="887.73" y="1680.85" width="14.60" height="96.05" fill="#ef3b22"/>
<rect x="887.73" y="1776.90" width="14.60" height="55.70" fill="#bd0026"/>
<rect x="906.30" y="1575.99" width="14.60" height="48.02" fill="#fd8b3c"/>
<rect x="906.30" y="1624.01" width="14.60" height="99.09" fill="#ef3b22"/>
<rect x="906.30" y="1723.10" width="14.60" height="109.50" fill="#bd0026"/>
<rect x="924.87" y="1561.09" width="14.60" height="110.94" fill="#fd8b3c"/>
<rect x="924.87" y="1672.04" width="14.60" height="98.78" fill="#ef3b22"/>
<rect x="924.87" y="1770.82" width="14.60" height="61.78" fill="#bd0026"/>
<rect x="943.44" y="1546.20" width="14.60" height="125.84" fill="#fd8b3c"/>
<rect x="943.44" y="1672.04" width="14.60" height="72.04" fill="#ef3b22"/>
<rect x="943.44" y="1744.07" width="14.60" height="88.53" fill="#bd0026"/>
<rect x="962.01" y="1546.20" width="14.60" height="51.06" fill="#fd8b3c"/>
<rect x="962.01" y="1597.26" width="14.60" height="95.44" fill="#ef3b22"/>
<rect x="962.01" y="1692.71" width="14.60" height="139.89" fill="#bd0026"/>
<rect x="980.58" y="1644.98" width="14.60" height="99.09" fill="#fd8b3c"/>
<rect x="980.58" y="1744.07" width="14.60" height="47.72" fill="#ef3b22"/>
<rect x="980.58" y="1791.79" width="14.60" height="40.81" fill="#bd0026"/>
<rect x="999.15" y="1498.18" width="14.60" height="152.89" fill="#fd8b3c"/>
<rect x="999.15" y="1651.06" width="14.60" height="104.86" fill="#ef3b22"/>
<rect x="999.15" y="1755.93" width="14.60" height="76.67" fill="#bd0026"/>
<rect x="1017.72" y="1582.07" width="14.60" height="77.81" fill="#fd8b3c"/>
<rect x="1017.72" y="1659.88" width="14.60" height="117.02" fill="#ef3b22"/>
<rect x="1017.72" y="1776.90" width="14.60" height="55.70" fill="#bd0026"/>
<rect x="1036.29" y="1575.99" width="14.60" height="63.22" fill="#fd8b3c"/>
<rect x="1036.29" y="1639.21" width="14.60" height="104.86" fill="#ef3b22"/>
<rect x="1036.29" y="1744.07" width="14.60" height="88.53" fill="#bd0026"/>
<rect x="1054.86" y="1519.15" width="14.60" height="120.06" fill="#fd8b3c"/>
<rect x="1054.86" y="1639.21" width="14.60" height="89.67" fill="#ef3b22"/>
<rect x="1054.86" y="1728.88" width="14.60" height="103.72" fill="#bd0026"/>
<rect x="1073.43" y="1503.95" width="14.60" height="105.17" fill="#fd8b3c"/>
<rect x="1073.43" y="1609.12" width="14.60" height="119.76" fill="#ef3b22"/>
<rect x="1073.43" y="1728.88" width="14.60" height="103.72" fill="#bd0026"/>
<rect x="1092.00" y="1524.92" width="14.60" height="93.31" fill="#fd8b3c"/>
<rect x="1092.00" y="1618.24" width="14.60" height="95.74" fill="#ef3b22"/>
<rect x="1092.00" y="1713.98" width="14.60" height="118.62" fill="#bd0026"/>
<rect x="1110.57" y="1524.92" width="14.60" height="114.29" fill="#fd8b3c"/>
<rect x="1110.57" y="1639.21" width="14.60" height="83.89" fill="#ef3b22"/>
<rect x="1110.57" y="1723.10" width="14.60" height="109.50" fill="#bd0026"/>
<rect x="1129.14" y="1540.12" width="14.60" height="110.94" fill="#fd8b3c"/>
<rect x="1129.14" y="1651.06" width="14.60" height="93.01" fill="#ef3b22"/>
<rect x="1129.14" y="1744.07" width="14.60" height="88.53" fill="#bd0026"/>
<rect x="1147.71" y="1588.15" width="14.60" height="92.71" fill="#fd8b3c"/>
<rect x="1147.71" y="1680.85" width="14.60" height="96.05" fill="#ef3b22"/>
<rect x="1147.71" y="1776.90" width="14.60" height="55.70" fill="#bd0026"/>
<rect x="1166.28" y="1561.09" width="14.60" height="62.92" fill="#fd8b3c"/>
<rect x="1166.28" y="1624.01" width="14.60" height="89.97" fill="#ef3b22"/>
<rect x="1166.28" y="1713.98" width="14.60" height="118.62" fill="#bd0026"/>
<rect x="1184.85" y="1665.96" width="14.60" height="78.12" fill="#fd8b3c"/>
<rect x="1184.85" y="1744.07" width="14.60" height="32.83" fill="#ef3b22"/>
<rect x="1184.85" y="1776.90" width="14.60" height="55.70" fill="#bd0026"/>
<rect x="1203.42" y="1624.01" width="14.60" height="56.84" fill="#fd8b3c"/>
<rect x="1203.42" y="1680.85" width="14.60" height="75.08" fill="#ef3b22"/>
<rect x="1203.42" y="1755.93" width="14.60" height="76.67" fill="#bd0026"/>
<rect x="1221.99" y="1561.09" width="14.60" height="140.73" fill="#fd8b3c"/>
<rect x="1221.99" y="1701.82" width="14.60" height="69.00" fill="#ef3b22"/>
<rect x="1221.99" y="1770.82" width="14.60" height="61.78" fill="#bd0026"/>
<rect x="1240.56" y="1519.15" width="14.60" height="83.89" fill="#fd8b3c"/>
<rect x="1240.56" y="1603.04" width="14.60" height="131.91" fill="#ef3b22"/>
<rect x="1240.56" y="1734.95" width="14.60" height="97.65" fill="#bd0026"/>
<rect x="1259.13" y="1555.02" width="14.60" height="110.94" fill="#fd8b3c"/>
<rect x="1259.13" y="1665.96" width="14.60" height="83.89" fill="#ef3b22"/>
<rect x="1259.13" y="1749.85" width="14.60" height="82.75" fill="#bd0026"/>
<rect x="1277.70" y="1603.04" width="14.60" height="69.00" fill="#fd8b3c"/>
<rect x="1277.70" y="1672.04" width="14.60" height="72.04" fill="#ef3b22"/>
<rect x="1277.70" y="1744.07" width="14.60" height="88.53" fill="#bd0026"/>
<rect x="1296.27" y="1540.12" width="14.60" height="104.86" fill="#fd8b3c"/>
<rect x="1296.27" y="1644.98" width="14.60" height="83.89" fill="#ef3b22"/>
<rect x="1296.27" y="1728.88" width="14.60" height="103.72" fill="#bd0026"/>
<rect x="1314.84" y="1618.24" width="14.60" height="89.67" fill="#fd8b3c"/>
<rect x="1314.84" y="1707.90" width="14.60" height="78.12" fill="#ef3b22"/>
<rect x="1314.84" y="1786.02" width="14.60" height="46.58" fill="#bd0026"/>
<rect x="1333.41" y="1567.17" width="14.60" height="113.68" fill="#fd8b3c"/>
<rect x="1333.41" y="1680.85" width="14.60" height="89.97" fill="#ef3b22"/>
<rect x="1333.41" y="1770.82" width="14.60" height="61.78" fill="#bd0026"/>
<rect x="1351.98" y="1644.98" width="14.60" height="69.00" fill="#fd8b3c"/>
<rect x="1351.98" y="1713.98" width="14.60" height="50.76" fill="#ef3b22"/>
<rect x="1351.98" y="1764.74" width="14.60" height="67.86" fill="#bd0026"/>
<rect x="1370.55" y="1540.12" width="14.60" height="89.97" fill="#fd8b3c"/>
<rect x="1370.55" y="1630.09" width="14.60" height="98.78" fill="#ef3b22"/>
<rect x="1370.55" y="1728.88" width="14.60" height="103.72" fill="#bd0026"/>
<rect x="1389.12" y="1567.17" width="14.60" height="83.89" fill="#fd8b3c"/>
<rect x="1389.12" y="1651.06" width="14.60" height="83.89" fill="#ef3b22"/>
<rect x="1389.12" y="1734.95" width="14.60" height="97.65" fill="#bd0026"/>
<rect x="1407.69" y="1618.24" width="14.60" height="68.69" fill="#fd8b3c"/>
<rect x="1407.69" y="1686.93" width="14.60" height="48.02" fill="#ef3b22"/>
<rect x="1407.69" y="1734.95" width="14.60" height="97.65" fill="#bd0026"/>
<rect x="1426.26" y="1603.04" width="14.60" height="98.78" fill="#fd8b3c"/>
<rect x="1426.26" y="1701.82" width="14.60" height="54.10" fill="#ef3b22"/>
<rect x="1426.26" y="1755.93" width="14.60" height="76.67" fill="#bd0026"/>
<rect x="1444.83" y="1609.12" width="14.60" height="56.84" fill="#fd8b3c"/>
<rect x="1444.83" y="1665.96" width="14.60" height="48.02" fill="#ef3b22"/>
<rect x="1444.83" y="1713.98" width="14.60" height="118.62" fill="#bd0026"/>
<rect x="1463.40" y="1603.04" width="14.60" height="69.00" fill="#fd8b3c"/>
<rect x="1463.40" y="1672.04" width="14.60" height="83.89" fill="#ef3b22"/>
<rect x="1463.40" y="1755.93" width="14.60" height="76.67" fill="#bd0026"/>
<rect x="1481.97" y="1567.17" width="14.60" height="77.81" fill="#fd8b3c"/>
<rect x="1481.97" y="1644.98" width="14.60" height="83.89" fill="#ef3b22"/>
<rect x="1481.97" y="1728.88" width="14.60" height="103.72" fill="#bd0026"/>
<rect x="1500.54" y="1540.12" width="14.60" height="146.81" fill="#fd8b3c"/>
<rect x="1500.54" y="1686.93" width="14.60" height="110.94" fill="#ef3b22"/>
<rect x="1500.54" y="1797.87" width="14.60" height="34.73" fill="#bd0026"/>
<rect x="1519.11" y="1597.26" width="14.60" height="68.69" fill="#fd8b3c"/>
<rect x="1519.11" y="1665.96" width="14.60" height="120.06" fill="#ef3b22"/>
<rect x="1519.11" y="1786.02" width="14.60" height="46.58" fill="#bd0026"/>
<rect x="1537.68" y="1603.04" width="14.60" height="69.00" fill="#fd8b3c"/>
<rect x="1537.68" y="1672.04" width="14.60" height="92.71" fill="#ef3b22"/>
<rect x="1537.68" y="1764.74" width="14.60" height="67.86" fill="#bd0026"/>
<rect x="1556.25" y="1672.04" width="14.60" height="56.84" fill="#fd8b3c"/>
<rect x="1556.25" y="1728.88" width="14.60" height="57.14" fill="#ef3b22"/>
<rect x="1556.25" y="1786.02" width="14.60" height="46.58" fill="#bd0026"/>
<rect x="1574.82" y="1503.95" width="14.60" height="78.12" fill="#fd8b3c"/>
<rect x="1574.82" y="1582.07" width="14.60" height="125.84" fill="#ef3b22"/>
<rect x="1574.82" y="1707.90" width="14.60" height="124.70" fill="#bd0026"/>
<rect x="1593.39" y="1618.24" width="14.60" height="95.74" fill="#fd8b3c"/>
<rect x="1593.39" y="1713.98" width="14.60" height="41.95" fill="#ef3b22"/>
<rect x="1593.39" y="1755.93" width="14.60" height="76.67" fill="#bd0026"/>
<rect x="1611.96" y="1519.15" width="14.60" height="5.78" fill="#fdc35a"/>
<rect x="1611.96" y="1524.92" width="14.60" height="72.34" fill="#fd8b3c"/>
<rect x="1611.96" y="1597.26" width="14.60" height="137.69" fill="#ef3b22"/>
<rect x="1611.96" y="1734.95" width="14.60" height="97.65" fill="#bd0026"/>
<rect x="1630.53" y="1588.15" width="14.60" height="92.71" fill="#fd8b3c"/>
<rect x="1630.53" y="1680.85" width="14.60" height="96.05" fill="#ef3b22"/>
<rect x="1630.53" y="1776.90" width="14.60" height="55.70" fill="#bd0026"/>
<rect x="1649.10" y="1567.17" width="14.60" height="77.81" fill="#fd8b3c"/>
<rect x="1649.10" y="1644.98" width="14.60" height="110.94" fill="#ef3b22"/>
<rect x="1649.10" y="1755.93" width="14.60" height="76.67" fill="#bd0026"/>
<rect x="1667.67" y="1639.21" width="14.60" height="53.50" fill="#fd8b3c"/>
<rect x="1667.67" y="1692.71" width="14.60" height="57.14" fill="#ef3b22"/>
<rect x="1667.67" y="1749.85" width="14.60" height="82.75" fill="#bd0026"/>
<rect x="1686.24" y="1597.26" width="14.60" height="68.69" fill="#fd8b3c"/>
<rect x="1686.24" y="1665.96" width="14.60" height="69.00" fill="#ef3b22"/>
<rect x="1686.24" y="1734.95" width="14.60" height="97.65" fill="#bd0026"/>
<rect x="1704.81" y="1540.12" width="14.60" height="110.94" fill="#fd8b3c"/>
<rect x="1704.81" y="1651.06" width="14.60" height="98.78" fill="#ef3b22"/>
<rect x="1704.81" y="1749.85" width="14.60" height="82.75" fill="#bd0026"/>
<rect x="1723.38" y="1513.07" width="14.60" height="96.05" fill="#fd8b3c"/>
<rect x="1723.38" y="1609.12" width="14.60" height="83.59" fill="#ef3b22"/>
<rect x="1723.38" y="1692.71" width="14.60" height="139.89" fill="#bd0026"/>
<rect x="1741.95" y="1546.20" width="14.60" height="98.78" fill="#fd8b3c"/>
<rect x="1741.95" y="1644.98" width="14.60" height="83.89" fill="#ef3b22"/>
<rect x="1741.95" y="1728.88" width="14.60" height="103.72" fill="#bd0026"/>
<rect x="1760.52" y="1524.92" width="14.60" height="120.06" fill="#fd8b3c"/>
<rect x="1760.52" y="1644.98" width="14.60" height="78.12" fill="#ef3b22"/>
<rect x="1760.52" y="1723.10" width="14.60" height="109.50" fill="#bd0026"/>
<rect x="1779.09" y="1513.07" width="14.60" height="146.81" fill="#fd8b3c"/>
<rect x="1779.09" y="1659.88" width="14.60" height="84.19" fill="#ef3b22"/>
<rect x="1779.09" y="1744.07" width="14.60" height="88.53" fill="#bd0026"/>
<rect x="1797.66" y="1524.92" width="14.60" height="114.29" fill="#fd8b3c"/>
<rect x="1797.66" y="1639.21" width="14.60" height="95.74" fill="#ef3b22"/>
<rect x="1797.66" y="1734.95" width="14.60" height="97.65" fill="#bd0026"/>
<rect x="1816.23" y="1588.15" width="14.60" height="9.12" fill="#fdc35a"/>
<rect x="1816.23" y="1597.26" width="14.60" height="83.59" fill="#fd8b3c"/>
<rect x="1816.23" y="1680.85" width="14.60" height="75.08" fill="#ef3b22"/>
<rect x="1816.23" y="1755.93" width="14.60" height="76.67" fill="#bd0026"/>
<rect x="1834.80" y="1561.09" width="14.60" height="83.89" fill="#fd8b3c"/>
<rect x="1834.80" y="1644.98" width="14.60" height="89.97" fill="#ef3b22"/>
<rect x="1834.80" y="1734.95" width="14.60" height="97.65" fill="#bd0026"/>
<rect x="1853.37" y="1546.20" width="14.60" height="104.86" fill="#fd8b3c"/>
<rect x="1853.37" y="1651.06" width="14.60" height="98.78" fill="#ef3b22"/>
<rect x="1853.37" y="1749.85" width="14.60" height="82.75" fill="#bd0026"/>
<rect x="1871.94" y="1534.04" width="14.60" height="84.19" fill="#fd8b3c"/>
<rect x="1871.94" y="1618.24" width="14.60" height="83.59" fill="#ef3b22"/>
<rect x="1871.94" y="1701.82" width="14.60" height="130.78" fill="#bd0026"/>
<rect x="1890.51" y="1503.95" width="14.60" height="105.17" fill="#fd8b3c"/>
<rect x="1890.51" y="1609.12" width="14.60" height="77.81" fill="#ef3b22"/>
<rect x="1890.51" y="1686.93" width="14.60" height="145.67" fill="#bd0026"/>
<rect x="1909.08" y="1546.20" width="14.60" height="113.68" fill="#fd8b3c"/>
<rect x="1909.08" y="1659.88" width="14.60" height="84.19" fill="#ef3b22"/>
<rect x="1909.08" y="1744.07" width="14.60" height="88.53" fill="#bd0026"/>
<rect x="350.00" y="1411.80" width="1578.00" height="2.20" fill="rgba(0,0,0,0.12)"/>
<rect x="350.00" y="1551.60" width="1578.00" height="2.20" fill="rgba(0,0,0,0.12)"/>
<rect x="350.00" y="1691.60" width="1578.00" height="2.20" fill="rgba(0,0,0,0.12)"/>
<text x="339.7" y="1423.6" font-size="30" fill="#333" font-weight="400" text-anchor="end" textLength="31.54" lengthAdjust="spacingAndGlyphs">60</text>
<text x="339.7" y="1563.4" font-size="30" fill="#333" font-weight="400" text-anchor="end" textLength="31.54" lengthAdjust="spacingAndGlyphs">40</text>
<text x="339.7" y="1703.4" font-size="30" fill="#333" font-weight="400" text-anchor="end" textLength="31.54" lengthAdjust="spacingAndGlyphs">20</text>
<text x="339.7" y="1843.4" font-size="30" fill="#333" font-weight="400" text-anchor="end" textLength="15.77" lengthAdjust="spacingAndGlyphs">0</text>
<rect x="349.00" y="1832.00" width="1579.00" height="2.00" fill="#333"/>
<rect x="460.00" y="1833.00" width="2.00" height="14.50" fill="#333"/>
<text x="461.0" y="1877.9" font-size="30" fill="#333" font-weight="400" text-anchor="middle" textLength="72.17999999999999" lengthAdjust="spacingAndGlyphs">14:30</text>
<rect x="738.80" y="1833.00" width="2.00" height="14.50" fill="#333"/>
<text x="739.8" y="1877.9" font-size="30" fill="#333" font-weight="400" text-anchor="middle" textLength="72.17999999999999" lengthAdjust="spacingAndGlyphs">15:00</text>
<rect x="1017.10" y="1833.00" width="2.00" height="14.50" fill="#333"/>
<text x="1018.1" y="1877.9" font-size="30" fill="#333" font-weight="400" text-anchor="middle" textLength="72.17999999999999" lengthAdjust="spacingAndGlyphs">15:30</text>
<rect x="1295.80" y="1833.00" width="2.00" height="14.50" fill="#333"/>
<text x="1296.8" y="1877.9" font-size="30" fill="#333" font-weight="400" text-anchor="middle" textLength="72.17999999999999" lengthAdjust="spacingAndGlyphs">16:00</text>
<rect x="1574.60" y="1833.00" width="2.00" height="14.50" fill="#333"/>
<text x="1575.6" y="1877.9" font-size="30" fill="#333" font-weight="400" text-anchor="middle" textLength="72.17999999999999" lengthAdjust="spacingAndGlyphs">16:30</text>
<rect x="1853.00" y="1833.00" width="2.00" height="14.50" fill="#333"/>
<text x="1854.0" y="1877.9" font-size="30" fill="#333" font-weight="400" text-anchor="middle" textLength="72.17999999999999" lengthAdjust="spacingAndGlyphs">17:00</text>
<rect x="347.20" y="1914.00" width="47.80" height="47.80" fill="#fdc35a"/>
<text x="419.0" y="1948.0" font-size="30" fill="#333" font-weight="400" text-anchor="start" textLength="47.8" lengthAdjust="spacingAndGlyphs">500</text>
<rect x="521.00" y="1914.00" width="47.80" height="47.80" fill="#fd8b3c"/>
<text x="594.0" y="1948.0" font-size="30" fill="#333" font-weight="400" text-anchor="start" textLength="47.5" lengthAdjust="spacingAndGlyphs">502</text>
<rect x="697.00" y="1914.00" width="47.80" height="47.80" fill="#ef3b22"/>
<text x="769.6" y="1948.0" font-size="30" fill="#333" font-weight="400" text-anchor="start" textLength="48.1" lengthAdjust="spacingAndGlyphs">503</text>
<rect x="873.00" y="1914.00" width="47.80" height="47.80" fill="#bd0026"/>
<text x="945.3" y="1948.0" font-size="30" fill="#333" font-weight="400" text-anchor="start" textLength="48.1" lengthAdjust="spacingAndGlyphs">504</text>
<text x="2133.9" y="635.8" font-size="30" fill="#333" font-weight="400" text-anchor="end" textLength="31.54" lengthAdjust="spacingAndGlyphs">10</text>
<text x="2133.9" y="720.0" font-size="30" fill="#333" font-weight="400" text-anchor="end" textLength="15.77" lengthAdjust="spacingAndGlyphs">8</text>
<text x="2133.9" y="803.8" font-size="30" fill="#333" font-weight="400" text-anchor="end" textLength="15.77" lengthAdjust="spacingAndGlyphs">6</text>
<text x="2133.9" y="887.6" font-size="30" fill="#333" font-weight="400" text-anchor="end" textLength="15.77" lengthAdjust="spacingAndGlyphs">4</text>
<text x="2133.9" y="971.6" font-size="30" fill="#333" font-weight="400" text-anchor="end" textLength="15.77" lengthAdjust="spacingAndGlyphs">2</text>
<text x="2133.9" y="1055.8" font-size="30" fill="#333" font-weight="400" text-anchor="end" textLength="15.77" lengthAdjust="spacingAndGlyphs">0</text>
<clipPath id="lclip"><rect x="2144.3" y="600" width="1577.3" height="445"/></clipPath>
<g fill="none" stroke-width="5.8" stroke-linejoin="round" clip-path="url(#lclip)">
<path d="M2144.3 976.4 L2152.4 959.1 L2161.8 986.7 L2171.4 960.8 L2181.1 972.9 L2190.4 990.2 L2199.1 993.6 L2209.4 997.1 L2218.1 998.8 L2227.4 990.2 L2237.0 978.1 L2245.7 986.7 L2255.0 943.6 L2264.7 991.9 L2273.3 993.6 L2283.0 853.8 L2292.3 993.6 L2300.9 986.7 L2311.3 995.4 L2319.9 993.6 L2329.6 978.1 L2338.9 988.5 L2348.2 991.9 L2356.9 991.9 L2366.5 988.5 L2375.9 998.8 L2385.5 1000.6 L2394.2 983.3 L2403.5 867.6 L2413.1 1002.3 L2422.5 1004.0 L2431.5 1001.2 L2440.8 1002.3 L2450.4 856.2 L2459.8 993.6 L2469.1 995.4 L2478.8 997.8 L2487.4 1001.2 L2496.7 993.6 L2505.7 865.2 L2515.0 1002.3 L2524.3 981.6 L2534.0 997.1 L2542.6 998.8 L2552.0 859.7 L2561.6 1002.3 L2570.3 986.7 L2578.9 996.4 L2588.6 997.1 L2597.9 998.8 L2607.2 1002.3 L2616.9 867.6 L2626.2 1012.6 L2635.9 993.6 L2645.2 1004.0 L2654.9 997.1 L2664.2 997.1 L2673.5 993.0 L2682.5 998.8 L2691.8 993.6 L2701.5 867.6 L2710.8 1004.7 L2719.8 990.2 L2729.1 985.0 L2738.4 986.0 L2748.1 981.6 L2756.7 991.9 L2766.4 1002.3 L2775.7 999.9 L2785.0 1001.2 L2793.7 1003.3 L2803.3 1004.0 L2812.7 1003.3 L2821.6 993.6 L2831.0 1005.7 L2839.6 999.9 L2849.3 1000.6 L2858.6 986.7 L2867.9 1005.7 L2876.9 1002.3 L2886.2 984.0 L2895.9 1000.6 L2905.2 1001.2 L2914.5 1003.3 L2924.2 1002.3 L2930.0 988.5 L2940.4 1000.6 L2950.7 1000.6 L2961.1 1002.3 L2969.7 998.8 L2978.3 1001.2 L2988.0 990.2 L2997.3 1004.0 L3006.7 998.8 L3016.3 998.8 L3026.0 1003.3 L3035.3 986.7 L3044.0 1002.3 L3053.6 999.9 L3062.9 1004.0 L3072.3 1003.3 L3081.9 1001.2 L3090.6 999.9 L3099.9 1001.2 L3108.9 986.0 L3118.2 988.5 L3127.5 995.4 L3137.2 993.6 L3145.8 988.5 L3155.1 978.1 L3164.8 978.1 L3174.5 967.7 L3183.8 953.9 L3194.2 951.5 L3202.8 986.7 L3212.5 993.6 L3220.7 948.1 L3230.4 971.2 L3240.1 964.3 L3248.4 729.5 L3258.0 974.7 L3266.7 985.0 L3276.0 990.2 L3285.0 987.4 L3295.3 1004.0 L3304.7 986.7 L3314.0 990.2 L3323.0 966.0 L3332.3 852.1 L3341.6 995.4 L3351.3 863.1 L3360.6 999.9 L3369.2 1002.3 L3378.9 986.0 L3388.2 995.4 L3397.9 995.4 L3407.2 997.1 L3416.2 996.4 L3425.5 995.4 L3434.8 996.4 L3444.5 999.9 L3453.1 998.8 L3462.8 990.2 L3472.1 997.1 L3481.5 993.6 L3491.1 988.5 L3499.8 1000.6 L3509.4 1001.2 L3518.7 1001.2 L3528.1 1000.6 L3537.7 1000.6 L3547.1 986.0 L3555.7 1001.2 L3565.4 1002.3 L3574.0 1001.2 L3583.3 996.4 L3593.0 1002.3 L3601.6 993.6 L3611.3 974.7 L3620.6 998.8 L3629.2 993.6 L3638.6 1003.3 L3648.2 989.5 L3657.6 1000.6 L3667.2 1000.6 L3676.9 993.6 L3686.2 996.4 L3695.5 1003.3 L3704.2 1000.6 L3713.8 1000.6 L3721.6 999.9" stroke="#7fc0df"/>
<path d="M2144.3 988.5 L2152.4 997.1 L2161.8 1000.6 L2171.4 995.4 L2181.1 995.4 L2190.4 1000.6 L2199.1 1002.3 L2209.4 1004.0 L2218.1 1002.3 L2227.4 1002.3 L2237.0 997.1 L2245.7 1002.3 L2255.0 962.6 L2264.7 1002.3 L2273.3 1000.6 L2283.0 985.0 L2292.3 1004.0 L2302.7 1002.3 L2311.3 1002.3 L2319.9 1000.6 L2329.6 990.2 L2338.9 1002.3 L2348.2 1005.7 L2356.9 1004.7 L2366.5 1002.3 L2377.6 1002.0 L2385.5 1003.3 L2396.3 1000.3 L2403.5 1001.2 L2415.0 1005.8 L2422.5 1007.5 L2433.6 1002.6 L2443.0 1002.6 L2450.4 1000.6 L2461.6 1000.3 L2471.0 999.1 L2480.3 1001.7 L2489.6 999.7 L2496.7 1002.3 L2505.7 991.9 L2515.0 1004.0 L2524.3 1000.6 L2536.3 1001.3 L2542.6 1002.3 L2552.0 983.3 L2561.6 1005.7 L2573.6 1001.2 L2578.9 1002.3 L2592.3 1001.5 L2601.6 1004.0 L2611.0 1006.8 L2616.9 1005.7 L2629.6 1002.2 L2635.9 1003.3 L2648.3 1002.8 L2654.9 1004.7 L2667.0 1004.3 L2676.3 1005.0 L2685.6 1002.3 L2695.0 1000.6 L2701.5 1000.6 L2713.6 1004.8 L2719.8 1003.3 L2732.3 999.2 L2738.4 1000.6 L2751.0 1004.7 L2760.3 1003.5 L2769.6 1004.6 L2775.7 1007.5 L2788.3 1004.8 L2797.6 1005.2 L2807.0 1007.2 L2816.3 1003.4 L2821.6 1004.7 L2835.0 1005.5 L2844.3 1006.0 L2853.6 1005.0 L2858.6 1005.7 L2872.3 1000.8 L2881.6 994.9 L2886.2 995.4 L2891.0 999.1 L2895.9 1007.5 L2909.6 1006.0 L2919.0 1008.4 L2930.0 1004.0 L2930.1 1007.5 L2937.6 1004.5 L2946.9 1005.0 L2956.3 1007.4 L2961.1 1007.5 L2965.6 1007.1 L2974.9 1006.2 L2984.3 1008.5 L2993.6 1007.9 L2999.1 1006.8 L3012.3 1004.5 L3021.6 1005.4 L3035.3 1004.0 L3040.3 1004.8 L3049.6 1007.7 L3058.9 1008.1 L3068.1 1008.1 L3077.6 1006.4 L3086.9 1009.2 L3096.3 1004.3 L3102.7 1005.7 L3118.2 1002.3 L3124.3 1001.3 L3137.2 1000.6 L3142.9 1000.7 L3155.1 997.1 L3164.8 1000.6 L3174.5 981.6 L3183.8 1004.0 L3189.6 992.6 L3194.2 986.7 L3202.8 998.8 L3212.5 1002.3 L3221.8 1002.3 L3230.4 991.9 L3240.1 995.4 L3248.4 859.0 L3258.0 979.8 L3266.7 993.6 L3276.0 1000.6 L3285.0 1000.6 L3295.3 1005.7 L3304.7 998.8 L3310.9 999.4 L3323.0 1000.6 L3329.6 998.1 L3338.9 1001.0 L3351.3 999.9 L3357.6 1002.1 L3366.9 1002.6 L3378.9 1004.0 L3385.6 1005.6 L3394.9 1002.5 L3404.3 1004.0 L3413.6 1003.2 L3425.5 1002.3 L3432.3 1003.1 L3441.6 1003.1 L3450.9 1005.6 L3462.8 1004.7 L3469.6 1006.6 L3478.9 1003.8 L3491.1 1003.3 L3497.6 1004.2 L3506.9 1001.3 L3516.3 1004.6 L3525.6 1004.5 L3534.9 1006.3 L3547.1 1004.0 L3553.6 1006.1 L3562.9 1004.1 L3572.3 1005.4 L3583.3 1006.8 L3590.9 1006.9 L3600.3 1002.7 L3611.3 1004.0 L3618.9 1004.2 L3628.3 1003.1 L3637.6 1003.3 L3648.2 1005.7 L3656.3 1002.1 L3665.6 1003.9 L3676.9 1000.6 L3684.3 999.8 L3693.6 1001.9 L3702.9 1004.0 L3712.3 1007.9 L3721.6 1007.5" stroke="#ecbd08"/>
<path d="M2144.3 1007.5 L2153.6 1010.7 L2163.0 1010.2 L2172.3 1009.0 L2181.6 1008.4 L2191.0 1010.7 L2200.3 1010.2 L2209.6 1009.3 L2219.0 1006.8 L2228.3 1008.9 L2237.6 1011.5 L2247.0 1009.7 L2256.3 1008.0 L2265.6 1006.2 L2275.0 1006.8 L2284.3 1010.2 L2293.6 1011.2 L2303.0 1007.9 L2312.3 1005.2 L2321.6 1007.9 L2331.0 1010.1 L2340.3 1010.9 L2349.6 1010.0 L2359.0 1007.7 L2368.3 1008.6 L2377.6 1011.2 L2387.0 1011.0 L2396.3 1006.4 L2405.6 1008.5 L2415.0 1010.0 L2424.3 1012.3 L2433.6 1011.1 L2443.0 1007.2 L2452.3 1006.9 L2461.6 1008.0 L2471.0 1011.5 L2480.3 1008.1 L2489.6 1005.8 L2499.0 1006.4 L2508.3 1008.6 L2517.6 1010.4 L2527.0 1007.6 L2536.3 1005.3 L2545.6 1006.5 L2555.0 1008.8 L2564.3 1010.4 L2573.6 1007.1 L2583.0 1008.4 L2592.3 1008.6 L2601.6 1009.3 L2611.0 1009.8 L2620.3 1007.8 L2629.6 1006.5 L2639.0 1007.2 L2648.3 1012.0 L2657.6 1012.1 L2667.0 1007.8 L2676.3 1007.0 L2685.6 1007.5 L2695.0 1009.5 L2704.3 1009.5 L2713.6 1006.8 L2723.0 1008.4 L2732.3 1008.2 L2741.6 1009.3 L2751.0 1011.3 L2760.3 1007.4 L2769.6 1006.2 L2779.0 1010.0 L2788.3 1009.3 L2797.6 1009.3 L2807.0 1008.9 L2816.3 1009.1 L2825.6 1010.9 L2835.0 1010.0 L2844.3 1008.3 L2853.6 1005.8 L2863.0 1009.1 L2872.3 1010.6 L2881.6 1011.7 L2891.0 1007.7 L2900.3 1006.0 L2909.6 1009.7 L2919.0 1012.5 L2928.3 1011.6 L2937.6 1009.1 L2946.9 1008.2 L2956.3 1009.9 L2965.6 1009.9 L2974.9 1010.1 L2984.3 1007.1 L2993.6 1005.5 L3002.9 1007.7 L3012.3 1010.2 L3021.6 1008.8 L3030.9 1008.0 L3040.3 1009.1 L3049.6 1009.7 L3058.9 1012.5 L3068.3 1011.0 L3077.6 1008.8 L3086.9 1007.3 L3096.3 1009.2 L3105.6 1009.9 L3114.9 1007.7 L3124.3 1006.0 L3133.6 1008.6 L3142.9 1012.0 L3152.3 1011.9 L3161.6 1008.3 L3170.9 1007.6 L3180.3 1009.7 L3189.6 1009.3 L3198.9 1010.9 L3208.3 1009.4 L3217.6 1008.1 L3226.9 1009.9 L3236.3 1010.8 L3245.6 1002.9 L3254.9 1008.7 L3264.3 1006.6 L3273.6 1010.5 L3282.9 1012.7 L3292.3 1009.3 L3301.6 1007.0 L3310.9 1009.1 L3320.3 1010.7 L3329.6 1009.8 L3338.9 1007.9 L3348.3 1005.9 L3357.6 1009.3 L3366.9 1011.3 L3376.3 1009.6 L3385.6 1010.0 L3394.9 1008.8 L3404.3 1008.7 L3413.6 1010.0 L3422.9 1010.8 L3432.3 1007.0 L3441.6 1005.3 L3450.9 1010.3 L3460.3 1011.3 L3469.6 1010.5 L3478.9 1009.5 L3488.3 1006.8 L3497.6 1010.3 L3506.9 1012.1 L3516.3 1009.0 L3525.6 1006.7 L3534.9 1006.5 L3544.3 1008.5 L3553.6 1011.3 L3562.9 1008.8 L3572.3 1007.0 L3581.6 1006.2 L3590.9 1011.3 L3600.3 1010.4 L3609.6 1009.1 L3618.9 1007.4 L3628.3 1009.3 L3637.6 1009.9 L3646.9 1012.4 L3656.3 1008.8 L3665.6 1007.1 L3674.9 1008.3 L3684.3 1008.8 L3693.6 1010.4 L3702.9 1007.2 L3712.3 1005.2 L3721.6 1009.7" stroke="#9580bc"/>
<path d="M2144.3 1013.7 L2153.6 1015.6 L2163.0 1016.5 L2172.3 1015.3 L2181.6 1013.5 L2191.0 1013.3 L2200.3 1013.7 L2209.6 1015.4 L2219.0 1014.7 L2228.3 1016.1 L2237.6 1014.5 L2247.0 1013.4 L2256.3 1013.9 L2265.6 1013.6 L2275.0 1014.8 L2284.3 1016.4 L2293.6 1017.0 L2303.0 1015.0 L2312.3 1014.2 L2321.6 1013.2 L2331.0 1013.6 L2340.3 1015.2 L2349.6 1015.6 L2359.0 1016.0 L2368.3 1015.1 L2377.6 1015.1 L2387.0 1013.7 L2396.3 1014.5 L2405.6 1015.8 L2415.0 1015.1 L2424.3 1016.1 L2433.6 1016.3 L2443.0 1014.8 L2452.3 1012.3 L2461.6 1012.6 L2471.0 1014.6 L2480.3 1014.7 L2489.6 1015.3 L2499.0 1014.0 L2508.3 1014.3 L2517.6 1013.9 L2527.0 1014.6 L2536.3 1013.8 L2545.6 1016.3 L2555.0 1016.3 L2564.3 1014.1 L2573.6 1014.9 L2583.0 1014.4 L2592.3 1012.9 L2601.6 1015.9 L2611.0 1015.5 L2620.3 1015.9 L2629.6 1016.3 L2639.0 1014.7 L2648.3 1012.3 L2657.6 1013.5 L2667.0 1014.8 L2676.3 1015.4 L2685.6 1015.1 L2695.0 1014.6 L2704.3 1014.4 L2713.6 1012.0 L2723.0 1013.8 L2732.3 1014.7 L2741.6 1014.6 L2751.0 1015.5 L2760.3 1015.3 L2769.6 1013.8 L2779.0 1012.1 L2788.3 1014.9 L2797.6 1015.6 L2807.0 1017.1 L2816.3 1014.9 L2825.6 1014.4 L2835.0 1012.6 L2844.3 1013.9 L2853.6 1013.1 L2863.0 1013.9 L2872.3 1015.6 L2881.6 1017.0 L2891.0 1015.8 L2900.3 1013.1 L2909.6 1012.3 L2919.0 1014.8 L2928.3 1015.1 L2937.6 1016.4 L2946.9 1014.8 L2956.3 1013.8 L2965.6 1014.2 L2974.9 1013.0 L2984.3 1012.6 L2993.6 1016.0 L3002.9 1016.2 L3012.3 1016.6 L3021.6 1013.8 L3030.9 1014.6 L3040.3 1012.1 L3049.6 1014.7 L3058.9 1014.8 L3068.3 1015.5 L3077.6 1016.0 L3086.9 1016.0 L3096.3 1013.1 L3105.6 1012.2 L3114.9 1013.8 L3124.3 1014.3 L3133.6 1014.9 L3142.9 1015.0 L3152.3 1013.7 L3161.6 1012.9 L3170.9 1012.7 L3180.3 1013.3 L3189.6 1015.6 L3198.9 1015.3 L3208.3 1015.8 L3217.6 1014.0 L3226.9 1013.3 L3236.3 1011.9 L3245.6 1013.1 L3254.9 1013.7 L3264.3 1016.5 L3273.6 1016.0 L3282.9 1014.0 L3292.3 1013.6 L3301.6 1014.3 L3310.9 1012.8 L3320.3 1015.8 L3329.6 1015.7 L3338.9 1015.8 L3348.3 1015.7 L3357.6 1013.4 L3366.9 1013.2 L3376.3 1014.3 L3385.6 1016.3 L3394.9 1015.5 L3404.3 1016.7 L3413.6 1015.3 L3422.9 1014.0 L3432.3 1013.0 L3441.6 1013.5 L3450.9 1013.9 L3460.3 1015.0 L3469.6 1014.7 L3478.9 1015.4 L3488.3 1013.0 L3497.6 1012.3 L3506.9 1012.8 L3516.3 1016.0 L3525.6 1016.9 L3534.9 1016.2 L3544.3 1014.2 L3553.6 1012.9 L3562.9 1012.7 L3572.3 1013.8 L3581.6 1014.2 L3590.9 1015.8 L3600.3 1015.1 L3609.6 1015.9 L3618.9 1014.8 L3628.3 1013.3 L3637.6 1013.2 L3646.9 1016.3 L3656.3 1015.4 L3665.6 1015.4 L3674.9 1013.4 L3684.3 1013.2 L3693.6 1013.2 L3702.9 1013.9 L3712.3 1014.4 L3721.6 1016.0" stroke="#3398d1"/>
</g>
<rect x="2144.30" y="1044.50" width="1577.30" height="2.00" fill="#333"/>
<rect x="2254.00" y="1045.50" width="2.00" height="14.50" fill="#333"/>
<text x="2255.0" y="1089.7" font-size="30" fill="#333" font-weight="400" text-anchor="middle" textLength="72.17999999999999" lengthAdjust="spacingAndGlyphs">14:30</text>
<rect x="2532.70" y="1045.50" width="2.00" height="14.50" fill="#333"/>
<text x="2533.7" y="1089.7" font-size="30" fill="#333" font-weight="400" text-anchor="middle" textLength="72.17999999999999" lengthAdjust="spacingAndGlyphs">15:00</text>
<rect x="2811.70" y="1045.50" width="2.00" height="14.50" fill="#333"/>
<text x="2812.7" y="1089.7" font-size="30" fill="#333" font-weight="400" text-anchor="middle" textLength="72.17999999999999" lengthAdjust="spacingAndGlyphs">15:30</text>
<rect x="3090.00" y="1045.50" width="2.00" height="14.50" fill="#333"/>
<text x="3091.0" y="1089.7" font-size="30" fill="#333" font-weight="400" text-anchor="middle" textLength="72.17999999999999" lengthAdjust="spacingAndGlyphs">16:00</text>
<rect x="3368.20" y="1045.50" width="2.00" height="14.50" fill="#333"/>
<text x="3369.2" y="1089.7" font-size="30" fill="#333" font-weight="400" text-anchor="middle" textLength="72.17999999999999" lengthAdjust="spacingAndGlyphs">16:30</text>
<rect x="3647.20" y="1045.50" width="2.00" height="14.50" fill="#333"/>
<text x="3648.2" y="1089.7" font-size="30" fill="#333" font-weight="400" text-anchor="middle" textLength="72.17999999999999" lengthAdjust="spacingAndGlyphs">17:00</text>
<rect x="3252.00" y="624.90" width="3.00" height="420.60" fill="#000"/>
<line x1="3248.4" y1="725" x2="3216" y2="781.5" stroke="#000" stroke-width="2.5"/>
<circle cx="3248.4" cy="725" r="8.6" fill="#000"/>
<rect x="3036.40" y="781.30" width="179.50" height="49.40" fill="#4a4a4a"/>
<text x="3052.6" y="818.2" font-size="34" fill="#fff" font-weight="700" text-anchor="start" textLength="146" lengthAdjust="spacingAndGlyphs">7s 613ms</text>
<rect x="3126.00" y="830.70" width="90.00" height="49.70" fill="#7fc0df"/>
<text x="3144.0" y="866.0" font-size="34" fill="#1f1f1f" font-weight="400" text-anchor="start" textLength="54.6" lengthAdjust="spacingAndGlyphs">p95</text>
<rect x="2144.30" y="623.90" width="1577.30" height="2.20" fill="rgba(0,0,0,0.12)"/>
<rect x="2144.30" y="708.10" width="1577.30" height="2.20" fill="rgba(0,0,0,0.12)"/>
<rect x="2144.30" y="791.90" width="1577.30" height="2.20" fill="rgba(0,0,0,0.12)"/>
<rect x="2144.30" y="875.80" width="1577.30" height="2.20" fill="rgba(0,0,0,0.12)"/>
<rect x="2144.30" y="959.80" width="1577.30" height="2.20" fill="rgba(0,0,0,0.12)"/>
<path d="M3168.1 1060.2 H3234 L3248.8 1045.9 L3263.6 1060.2 H3329.6 V1109 H3168.1 Z" fill="#444"/>
<text x="3187.0" y="1096.3" font-size="34" fill="#fff" font-weight="400" text-anchor="start" textLength="124.4" lengthAdjust="spacingAndGlyphs">16:17:00</text>
<rect x="2667.00" y="1120.00" width="153.80" height="59.80" fill="#eaf4fa"/>
<rect x="2140.60" y="1125.60" width="47.80" height="47.80" fill="#3398d1"/>
<text x="2213.0" y="1159.5" font-size="30" fill="#333" font-weight="400" text-anchor="start" textLength="50" lengthAdjust="spacingAndGlyphs">p50</text>
<rect x="2317.00" y="1125.60" width="47.80" height="47.80" fill="#9580bc"/>
<text x="2390.3" y="1159.5" font-size="30" fill="#333" font-weight="400" text-anchor="start" textLength="50" lengthAdjust="spacingAndGlyphs">p75</text>
<rect x="2495.00" y="1125.60" width="47.80" height="47.80" fill="#ecbd08"/>
<text x="2567.5" y="1159.5" font-size="30" fill="#333" font-weight="400" text-anchor="start" textLength="50.4" lengthAdjust="spacingAndGlyphs">p90</text>
<rect x="2673.00" y="1125.60" width="47.80" height="47.80" fill="#7fc0df"/>
<text x="2744.7" y="1159.5" font-size="30" fill="#333" font-weight="400" text-anchor="start" textLength="50.4" lengthAdjust="spacingAndGlyphs">p95</text>
<rect x="2852.2" y="1127.2" width="44.6" height="44.6" fill="none" stroke="#a690c8" stroke-width="3.2"/>
<text x="2922.0" y="1159.5" font-size="30" fill="#333" font-weight="400" text-anchor="start" textLength="50.4" lengthAdjust="spacingAndGlyphs">p99</text>
<rect x="3028.1" y="1127.2" width="44.6" height="44.6" fill="none" stroke="#f5cf40" stroke-width="3.2"/>
<text x="3100.4" y="1159.5" font-size="30" fill="#333" font-weight="400" text-anchor="start" textLength="58.5" lengthAdjust="spacingAndGlyphs">Max</text>
<rect x="2144.30" y="1412.80" width="1577.30" height="420.20" fill="#917fb7"/>
<path d="M2144.3 1534.3 L2155.9 1539.2 L2162.8 1540.2 L2171.4 1539.2 L2181.1 1514.3 L2190.4 1553.0 L2199.1 1548.1 L2209.4 1551.6 L2218.1 1535.0 L2227.4 1531.6 L2237.0 1558.5 L2245.7 1554.0 L2255.0 1531.6 L2264.7 1557.5 L2273.3 1563.3 L2283.0 1506.7 L2292.3 1556.4 L2302.7 1553.0 L2311.3 1553.0 L2319.9 1552.3 L2329.6 1522.9 L2338.9 1553.0 L2348.2 1526.4 L2356.9 1551.6 L2366.5 1549.5 L2375.9 1539.2 L2385.5 1549.5 L2403.5 1522.9 L2422.5 1559.2 L2431.5 1527.4 L2440.8 1551.6 L2450.4 1509.1 L2459.8 1551.6 L2469.1 1535.0 L2478.8 1557.5 L2487.4 1563.3 L2496.7 1556.4 L2505.7 1524.0 L2515.0 1532.3 L2524.3 1536.8 L2534.0 1560.9 L2542.6 1552.3 L2552.0 1515.0 L2561.6 1559.2 L2570.3 1553.0 L2578.9 1552.3 L2588.6 1554.0 L2597.9 1559.2 L2607.2 1557.5 L2616.9 1528.8 L2626.2 1559.9 L2635.9 1558.5 L2645.2 1539.2 L2654.9 1536.8 L2664.2 1559.2 L2673.5 1555.7 L2682.5 1539.2 L2691.8 1562.7 L2701.5 1529.8 L2710.8 1557.5 L2719.8 1537.8 L2729.1 1560.9 L2738.4 1516.0 L2748.1 1554.0 L2756.7 1538.5 L2766.4 1549.5 L2775.7 1551.6 L2785.0 1558.5 L2793.7 1539.2 L2803.3 1562.0 L2812.7 1555.1 L2821.6 1555.1 L2831.0 1559.9 L2839.6 1535.0 L2849.3 1539.2 L2858.6 1558.5 L2867.9 1558.5 L2876.9 1560.9 L2886.2 1536.8 L2895.9 1562.7 L2905.2 1537.8 L2914.5 1559.2 L2924.2 1555.7 L2930.0 1541.9 L2942.1 1510.9 L2951.4 1557.5 L2961.1 1559.9 L2970.7 1555.7 L2980.1 1539.2 L2988.7 1534.3 L2998.0 1555.1 L3006.7 1553.0 L3016.3 1562.0 L3026.0 1540.2 L3035.3 1540.2 L3044.0 1538.5 L3053.6 1531.6 L3062.9 1538.5 L3072.3 1522.9 L3081.9 1538.5 L3090.6 1555.1 L3099.9 1563.3 L3108.9 1525.4 L3118.2 1534.3 L3127.5 1552.3 L3137.2 1549.5 L3145.8 1558.5 L3156.2 1530.9 L3165.5 1541.9 L3175.2 1538.5 L3184.8 1535.0 L3194.2 1550.6 L3202.8 1553.0 L3212.5 1551.6 L3221.8 1535.0 L3230.4 1526.4 L3240.1 1521.2 L3248.4 1490.1 L3256.3 1524.7 L3258.0 1535.0 L3266.7 1537.8 L3276.0 1557.5 L3285.0 1531.6 L3295.3 1556.4 L3304.7 1556.4 L3314.0 1534.3 L3323.0 1535.0 L3332.3 1509.1 L3341.6 1534.3 L3351.3 1521.2 L3360.6 1556.4 L3369.2 1559.9 L3378.9 1540.2 L3388.2 1538.5 L3397.9 1557.5 L3407.2 1537.8 L3416.2 1557.5 L3425.5 1534.3 L3434.8 1555.1 L3444.5 1556.4 L3453.1 1559.2 L3462.8 1555.1 L3472.1 1556.4 L3481.5 1555.1 L3491.1 1527.4 L3499.8 1534.3 L3509.4 1560.9 L3518.7 1558.5 L3528.1 1565.4 L3537.7 1555.1 L3547.1 1541.2 L3555.7 1556.4 L3565.4 1539.2 L3574.0 1525.4 L3583.3 1552.3 L3593.0 1559.2 L3601.6 1541.9 L3611.3 1536.8 L3620.6 1525.4 L3629.2 1555.1 L3638.6 1541.9 L3648.2 1559.2 L3657.6 1537.8 L3667.2 1557.5 L3676.9 1555.7 L3686.2 1511.5 L3695.5 1537.8 L3704.2 1536.8 L3713.8 1526.4 L3721.6 1527.4 L3721.6 1833 L2144.3 1833 Z" fill="#3598cf" stroke="rgba(255,255,255,0.35)" stroke-width="1"/>
<path d="M2144.3 1672.5 L2155.9 1676.6 L2162.8 1681.8 L2171.4 1685.2 L2181.1 1636.9 L2190.4 1711.8 L2199.1 1709.4 L2209.4 1717.3 L2218.1 1679.4 L2227.4 1671.4 L2237.0 1715.3 L2245.7 1715.3 L2255.0 1668.0 L2264.7 1728.4 L2273.3 1730.1 L2283.0 1616.2 L2292.3 1724.3 L2302.7 1719.8 L2311.3 1716.3 L2319.9 1717.3 L2329.6 1649.0 L2338.9 1712.9 L2348.2 1659.3 L2356.9 1715.3 L2366.5 1715.3 L2375.9 1685.2 L2385.5 1718.0 L2403.5 1651.4 L2422.5 1734.6 L2431.5 1659.3 L2440.8 1712.9 L2450.4 1623.1 L2459.8 1716.3 L2469.1 1674.9 L2478.8 1723.2 L2487.4 1734.6 L2496.7 1722.2 L2505.7 1655.9 L2515.0 1679.4 L2524.3 1681.8 L2534.0 1726.7 L2542.6 1724.3 L2552.0 1631.0 L2561.6 1727.7 L2570.3 1719.8 L2578.9 1719.8 L2588.6 1717.3 L2597.9 1734.6 L2607.2 1726.7 L2616.9 1664.5 L2626.2 1735.3 L2635.9 1730.1 L2645.2 1688.7 L2654.9 1682.8 L2664.2 1735.3 L2673.5 1714.6 L2682.5 1688.7 L2691.8 1734.6 L2701.5 1659.3 L2710.8 1731.9 L2719.8 1683.5 L2729.1 1734.6 L2738.4 1633.4 L2748.1 1719.8 L2756.7 1687.7 L2766.4 1714.6 L2775.7 1718.0 L2785.0 1726.7 L2793.7 1690.4 L2803.3 1740.5 L2812.7 1724.3 L2821.6 1724.9 L2831.0 1740.5 L2839.6 1682.8 L2849.3 1685.2 L2858.6 1729.1 L2867.9 1734.6 L2876.9 1737.0 L2886.2 1680.1 L2895.9 1738.8 L2905.2 1683.5 L2914.5 1737.0 L2924.2 1734.6 L2930.0 1702.5 L2942.1 1628.3 L2951.4 1730.1 L2961.1 1733.6 L2970.7 1723.2 L2980.1 1690.4 L2988.7 1682.8 L2998.0 1728.4 L3006.7 1722.2 L3016.3 1737.0 L3026.0 1690.4 L3035.3 1688.7 L3044.0 1687.0 L3053.6 1678.3 L3062.9 1692.1 L3072.3 1655.2 L3081.9 1687.0 L3090.6 1716.3 L3099.9 1740.5 L3108.9 1658.6 L3118.2 1675.9 L3127.5 1719.8 L3137.2 1710.4 L3145.8 1715.3 L3156.2 1668.0 L3165.5 1687.0 L3175.2 1682.8 L3184.8 1677.3 L3194.2 1704.2 L3202.8 1715.3 L3212.5 1714.6 L3221.8 1673.1 L3230.4 1655.2 L3240.1 1649.7 L3248.4 1579.2 L3256.3 1659.3 L3258.0 1678.3 L3266.7 1681.8 L3276.0 1724.3 L3285.0 1669.7 L3295.3 1731.2 L3304.7 1722.2 L3314.0 1675.9 L3323.0 1678.3 L3332.3 1622.0 L3341.6 1680.1 L3351.3 1647.3 L3360.6 1724.9 L3369.2 1731.9 L3378.9 1691.1 L3388.2 1687.7 L3397.9 1720.8 L3407.2 1688.7 L3416.2 1724.3 L3425.5 1677.3 L3434.8 1721.5 L3444.5 1724.3 L3453.1 1734.6 L3462.8 1719.8 L3472.1 1726.7 L3481.5 1723.2 L3491.1 1661.1 L3499.8 1680.1 L3509.4 1740.5 L3518.7 1731.9 L3528.1 1742.2 L3537.7 1730.1 L3547.1 1690.4 L3555.7 1733.6 L3565.4 1693.9 L3574.0 1658.6 L3583.3 1717.3 L3593.0 1732.5 L3601.6 1693.9 L3611.3 1686.3 L3620.6 1655.9 L3629.2 1723.2 L3638.6 1696.6 L3648.2 1731.2 L3657.6 1685.2 L3667.2 1731.2 L3676.9 1724.3 L3686.2 1628.3 L3695.5 1687.0 L3704.2 1687.7 L3713.8 1664.5 L3721.6 1664.5 L3721.6 1833 L2144.3 1833 Z" fill="#a8b444" stroke="rgba(255,255,255,0.35)" stroke-width="1"/>
<path d="M2144.3 1812.8 L2153.6 1815.0 L2163.0 1818.2 L2172.3 1811.4 L2181.6 1813.6 L2191.0 1806.7 L2200.3 1807.7 L2209.6 1806.3 L2219.0 1814.3 L2228.3 1812.5 L2237.6 1809.2 L2247.0 1809.9 L2256.3 1809.0 L2265.6 1813.9 L2275.0 1814.3 L2284.3 1808.0 L2293.6 1809.4 L2303.0 1810.5 L2312.3 1810.4 L2321.6 1811.4 L2331.0 1811.0 L2340.3 1814.4 L2349.6 1819.2 L2359.0 1811.9 L2368.3 1808.1 L2377.6 1807.8 L2387.0 1807.1 L2396.3 1813.1 L2405.6 1816.0 L2415.0 1816.9 L2424.3 1814.6 L2433.6 1814.3 L2443.0 1812.6 L2452.3 1811.6 L2461.6 1809.3 L2471.0 1808.0 L2480.3 1811.2 L2489.6 1814.6 L2499.0 1817.3 L2508.3 1818.6 L2517.6 1814.9 L2527.0 1812.6 L2536.3 1811.0 L2545.6 1808.4 L2555.0 1810.5 L2564.3 1808.0 L2573.6 1809.5 L2583.0 1807.9 L2592.3 1810.9 L2601.6 1810.8 L2611.0 1811.4 L2620.3 1816.1 L2629.6 1814.7 L2639.0 1812.5 L2648.3 1814.5 L2657.6 1811.7 L2667.0 1810.5 L2676.3 1814.5 L2685.6 1816.8 L2695.0 1816.1 L2704.3 1816.5 L2713.6 1818.0 L2723.0 1821.2 L2732.3 1820.8 L2741.6 1812.5 L2751.0 1804.2 L2760.3 1809.6 L2769.6 1811.3 L2779.0 1816.5 L2788.3 1815.7 L2797.6 1817.1 L2807.0 1813.6 L2816.3 1810.3 L2825.6 1812.0 L2835.0 1810.0 L2844.3 1814.7 L2853.6 1813.6 L2863.0 1814.6 L2872.3 1813.4 L2881.6 1813.4 L2891.0 1816.1 L2900.3 1815.1 L2909.6 1812.6 L2919.0 1814.9 L2928.3 1811.7 L2937.6 1815.8 L2946.9 1818.4 L2956.3 1814.9 L2965.6 1811.7 L2974.9 1816.4 L2984.3 1813.8 L2993.6 1814.9 L3002.9 1817.2 L3012.3 1814.0 L3021.6 1812.7 L3030.9 1810.9 L3040.3 1810.7 L3049.6 1812.5 L3058.9 1812.0 L3068.3 1815.6 L3077.6 1816.7 L3086.9 1813.0 L3096.3 1816.9 L3105.6 1818.1 L3114.9 1816.1 L3124.3 1813.3 L3133.6 1807.4 L3142.9 1805.8 L3152.3 1809.5 L3161.6 1812.3 L3170.9 1813.5 L3180.3 1812.8 L3189.6 1814.8 L3198.9 1815.3 L3208.3 1811.9 L3217.6 1816.3 L3226.9 1817.2 L3236.3 1817.1 L3245.6 1817.4 L3254.9 1814.2 L3264.3 1812.4 L3273.6 1815.3 L3282.9 1811.0 L3292.3 1811.9 L3301.6 1808.8 L3310.9 1811.3 L3320.3 1810.8 L3329.6 1816.1 L3338.9 1817.9 L3348.3 1819.4 L3357.6 1814.7 L3366.9 1813.1 L3376.3 1812.2 L3385.6 1812.8 L3394.9 1811.8 L3404.3 1810.3 L3413.6 1813.1 L3422.9 1810.0 L3432.3 1809.1 L3441.6 1810.3 L3450.9 1811.0 L3460.3 1809.3 L3469.6 1809.8 L3478.9 1810.7 L3488.3 1813.7 L3497.6 1815.1 L3506.9 1816.2 L3516.3 1817.6 L3525.6 1817.1 L3534.9 1814.8 L3544.3 1814.1 L3553.6 1814.2 L3562.9 1813.4 L3572.3 1814.1 L3581.6 1815.2 L3590.9 1818.7 L3600.3 1817.1 L3609.6 1817.6 L3618.9 1814.1 L3628.3 1817.7 L3637.6 1818.0 L3646.9 1817.2 L3656.3 1813.1 L3665.6 1813.9 L3674.9 1808.8 L3684.3 1811.8 L3693.6 1813.8 L3702.9 1815.7 L3712.3 1817.1 L3721.6 1819.1 L3721.6 1833 L2144.3 1833 Z" fill="#df844f" stroke="rgba(255,255,255,0.35)" stroke-width="1"/>
<rect x="2144.30" y="1495.60" width="1577.30" height="2.20" fill="rgba(0,0,0,0.12)"/>
<rect x="2144.30" y="1579.50" width="1577.30" height="2.20" fill="rgba(0,0,0,0.12)"/>
<rect x="2144.30" y="1663.50" width="1577.30" height="2.20" fill="rgba(0,0,0,0.12)"/>
<rect x="2144.30" y="1747.70" width="1577.30" height="2.20" fill="rgba(0,0,0,0.12)"/>
<text x="2133.6" y="1423.6" font-size="30" fill="#333" font-weight="400" text-anchor="end" textLength="47.31" lengthAdjust="spacingAndGlyphs">100</text>
<text x="2133.6" y="1507.4" font-size="30" fill="#333" font-weight="400" text-anchor="end" textLength="31.54" lengthAdjust="spacingAndGlyphs">80</text>
<text x="2133.6" y="1591.3" font-size="30" fill="#333" font-weight="400" text-anchor="end" textLength="31.54" lengthAdjust="spacingAndGlyphs">60</text>
<text x="2133.6" y="1675.3" font-size="30" fill="#333" font-weight="400" text-anchor="end" textLength="31.54" lengthAdjust="spacingAndGlyphs">40</text>
<text x="2133.6" y="1759.5" font-size="30" fill="#333" font-weight="400" text-anchor="end" textLength="31.54" lengthAdjust="spacingAndGlyphs">20</text>
<text x="2133.6" y="1843.8" font-size="30" fill="#333" font-weight="400" text-anchor="end" textLength="15.77" lengthAdjust="spacingAndGlyphs">0</text>
<rect x="2144.30" y="1832.50" width="1577.30" height="2.00" fill="#333"/>
<rect x="2254.00" y="1833.50" width="2.00" height="14.50" fill="#333"/>
<text x="2255.0" y="1877.9" font-size="30" fill="#333" font-weight="400" text-anchor="middle" textLength="72.17999999999999" lengthAdjust="spacingAndGlyphs">14:30</text>
<rect x="2532.70" y="1833.50" width="2.00" height="14.50" fill="#333"/>
<text x="2533.7" y="1877.9" font-size="30" fill="#333" font-weight="400" text-anchor="middle" textLength="72.17999999999999" lengthAdjust="spacingAndGlyphs">15:00</text>
<rect x="2811.70" y="1833.50" width="2.00" height="14.50" fill="#333"/>
<text x="2812.7" y="1877.9" font-size="30" fill="#333" font-weight="400" text-anchor="middle" textLength="72.17999999999999" lengthAdjust="spacingAndGlyphs">15:30</text>
<rect x="3090.00" y="1833.50" width="2.00" height="14.50" fill="#333"/>
<text x="3091.0" y="1877.9" font-size="30" fill="#333" font-weight="400" text-anchor="middle" textLength="72.17999999999999" lengthAdjust="spacingAndGlyphs">16:00</text>
<rect x="3368.20" y="1833.50" width="2.00" height="14.50" fill="#333"/>
<text x="3369.2" y="1877.9" font-size="30" fill="#333" font-weight="400" text-anchor="middle" textLength="72.17999999999999" lengthAdjust="spacingAndGlyphs">16:30</text>
<rect x="3647.20" y="1833.50" width="2.00" height="14.50" fill="#333"/>
<text x="3648.2" y="1877.9" font-size="30" fill="#333" font-weight="400" text-anchor="middle" textLength="72.17999999999999" lengthAdjust="spacingAndGlyphs">17:00</text>
<rect x="3252.00" y="1412.80" width="3.00" height="420.60" fill="#000"/>
<rect x="2141.00" y="1914.20" width="47.80" height="47.80" fill="#917fb7"/>
<text x="2211.8" y="1948.0" font-size="30" fill="#333" font-weight="400" text-anchor="start" textLength="168.6" lengthAdjust="spacingAndGlyphs">auth-dotnet</text>
<rect x="2435.40" y="1914.20" width="47.80" height="47.80" fill="#3598cf"/>
<text x="2507.5" y="1948.0" font-size="30" fill="#333" font-weight="400" text-anchor="start" textLength="107.1" lengthAdjust="spacingAndGlyphs">user-db</text>
<rect x="2671.00" y="1914.20" width="47.80" height="47.80" fill="#a8b444"/>
<text x="2741.8" y="1948.0" font-size="30" fill="#333" font-weight="400" text-anchor="start" textLength="140.7" lengthAdjust="spacingAndGlyphs">web-store</text>
<rect x="2937.00" y="1914.20" width="47.80" height="47.80" fill="#df844f"/>
<text x="3009.2" y="1948.0" font-size="30" fill="#333" font-weight="400" text-anchor="start" textLength="252" lengthAdjust="spacingAndGlyphs">web-store-mongo</text>
<path d="M114.8 736.9 L126.8 748.5 L114.8 760 Z" fill="#5b5464"/>
<path d="M114.8 852.8 L126.8 865.8 L114.8 878.7 Z" fill="#5b5464"/>
<path d="M114.8 968.8 L126.8 981.8 L114.8 994.7 Z" fill="#5b5464"/>
<path d="M114.8 1088.3 L126.8 1100.5 L114.8 1112.7 Z" fill="#5b5464"/>
<path d="M114.8 1204.3 L126.8 1216.4 L114.8 1228.6 Z" fill="#5b5464"/>
<path d="M114.8 1321.4 L126.8 1333.8 L114.8 1346.1 Z" fill="#5b5464"/>
<path d="M114.8 1438.1 L126.8 1450.3 L114.8 1462.5 Z" fill="#5b5464"/>
<path d="M114.8 1555.3 L126.8 1567.2 L114.8 1579.2 Z" fill="#5b5464"/>
<path d="M114.8 1672.9 L126.8 1684.4 L114.8 1695.9 Z" fill="#5b5464"/>
<path d="M120.8 2069.9 L132.3 2082.3 L120.8 2094.8 Z" fill="#5b5464"/>
<g transform="translate(10 0) scale(0.08977)">
<path fill="#e4e3e8" d="M340 480 C 285 560, 285 650, 340 730 C 390 810, 415 900, 430 1000 L 565 1125 L 590 810 L 830 780 C 900 765, 965 740, 995 680 C 1012 620, 1002 560, 980 505 C 955 440, 935 370, 900 320 C 860 260, 800 205, 720 188 C 600 170, 470 200, 380 225 C 350 260, 345 400, 340 480 Z"/>
<path fill="#e4e3e8" d="M160 320 C 175 240, 230 170, 300 165 C 360 165, 405 240, 430 340 C 440 420, 400 485, 320 500 C 240 500, 165 420, 160 320 Z"/>
<path fill="none" stroke="#3e3846" stroke-width="26" d="M365 185 C 405 265, 425 350, 412 430 C 395 480, 350 498, 290 505"/>
<path fill="#e4e3e8" d="M785 180 C 800 125, 840 95, 880 95 C 930 100, 975 160, 995 230 C 1008 270, 1008 300, 1000 312 C 950 295, 890 255, 840 215 Z"/>
<path fill="none" stroke="#3e3846" stroke-width="20" d="M848 120 C 850 180, 870 240, 925 300"/>
<ellipse cx="600" cy="468" rx="50" ry="55" fill="#3e3846" transform="rotate(-25 600 468)"/>
<ellipse cx="872" cy="410" rx="36" ry="46" fill="#3e3846" transform="rotate(-15 872 410)"/>
<ellipse cx="885" cy="625" rx="64" ry="45" fill="#3e3846" transform="rotate(-8 885 625)"/>
<path fill="none" stroke="#3e3846" stroke-width="24" d="M548 700 C 620 785, 770 815, 905 722"/>
<path fill="#3e3846" d="M555 775 L1240 690 L1292 1152 L628 1272 Z"/>
<path fill="#e4e3e8" d="M578 797 L1215 715 L1250 1135 L648 1245 Z"/>
<path fill="#3e3846" d="M678 1185 L785 1020 L880 1042 L982 895 L1082 962 L1178 800 L1212 1108 Z"/>
<ellipse cx="390" cy="1140" rx="190" ry="160" fill="#3e3846" transform="rotate(35 390 1140)"/>
<ellipse cx="375" cy="1155" rx="168" ry="140" fill="#e4e3e8" transform="rotate(35 375 1155)"/>
</g>
<g fill="#a29fa8"><rect x="56" y="486.4" width="9.7" height="7.6"/><rect x="74.2" y="486.4" width="9.7" height="7.6"/><rect x="65.7" y="496" width="8.5" height="19.4"/><path d="M52 496 H64 V534.7 H48 Q45.6 534.7 45.6 532 V520 Z"/><path d="M87.6 496 H75.6 V534.7 H91.6 Q94 534.7 94 532 V520 Z"/></g>
<rect x="47.4" y="611.8" width="44.8" height="34" rx="4" fill="none" stroke="#a29fa8" stroke-width="3.6"/>
<rect x="45.6" y="610" width="48.4" height="6.5" rx="3" fill="#a29fa8"/>
<rect x="52" y="623.3" width="3.2" height="3" fill="#a29fa8"/><rect x="60" y="623.3" width="27.5" height="3" fill="#a29fa8"/>
<rect x="52" y="630.6" width="3.2" height="3" fill="#a29fa8"/><rect x="60" y="630.6" width="27.5" height="3" fill="#a29fa8"/>
<rect x="52" y="638" width="3.2" height="3" fill="#a29fa8"/><rect x="60" y="638" width="27.5" height="3" fill="#a29fa8"/>
<g fill="#a29fa8"><rect x="45.6" y="724" width="2.6" height="41.5"/><rect x="45.6" y="762.9" width="54.1" height="2.6"/><path d="M53 759 V745 L61.8 728.5 L77 745.5 L92.5 736 L96.6 759 Z"/></g>
<polygon points="67.0,857.8 56.6,863.8 46.2,857.8 46.2,845.8 56.6,839.8 67.0,845.8" fill="#a29fa8"/>
<polygon points="92.8,857.3 83.3,862.8 73.8,857.3 73.8,846.3 83.3,840.8 92.8,846.3" fill="none" stroke="#a29fa8" stroke-width="2.2"/>
<polygon points="80.4,881.0 70.0,887.0 59.6,881.0 59.6,869.0 70.0,863.0 80.4,869.0" fill="#a29fa8"/>
<circle cx="69.7" cy="979" r="21" fill="#a29fa8"/><rect x="65.8" y="964.5" width="7.8" height="19.5" rx="1.5" fill="#2f2837"/><rect x="65.8" y="987.3" width="7.8" height="6.2" rx="1" fill="#2f2837"/>
<path d="M49.9 1111.2 A21 21 0 0 1 48.7 1105.8 M48.7 1101.8 A21 21 0 0 1 50.0 1096.5 M51.8 1092.9 A21 21 0 0 1 55.3 1088.6 M58.5 1086.2 A21 21 0 0 1 63.5 1083.9 M67.4 1083.1 A21 21 0 0 1 72.9 1083.3" fill="none" stroke="#a29fa8" stroke-width="5"/>
<path d="M81.6 1086.8 A21 21 0 0 1 88.6 1112.9" fill="none" stroke="#a29fa8" stroke-width="5.5" stroke-linecap="round"/>
<path d="M83.5 1077.8 L72.5 1106 Q69 1110 65.5 1106 Q63 1102 66 1099 Z" fill="#a29fa8"/>
<g fill="#a29fa8"><rect x="45.6" y="1204.3" width="34.8" height="29"/><circle cx="63" cy="1197.5" r="5.6"/><rect x="60.5" y="1200" width="5" height="6"/><circle cx="87.5" cy="1219.7" r="6"/><rect x="79" y="1217" width="6" height="5.5"/></g>
<circle cx="63" cy="1230.5" r="4.8" fill="#2a2231"/><rect x="60.5" y="1230.5" width="5" height="4" fill="#2a2231"/>
<g fill="#ffffff"><rect x="45.6" y="1309.8" width="48.4" height="5.8"/><rect x="45.6" y="1322" width="8.5" height="5.9"/><rect x="61" y="1322" width="33" height="5.9"/><rect x="61" y="1333.8" width="18.2" height="5.8"/><rect x="85" y="1333.8" width="9" height="5.8"/><rect x="69.6" y="1346" width="9.6" height="5.6"/></g>
<path d="M56 1425.8 H93.5 L85 1458 H49.5 Q46.5 1458 47.3 1455 Z" fill="#a29fa8"/>
<path d="M48 1459 Q45 1462 48.5 1466.5 H85.5 L95 1430 L92.5 1430 L84 1462.5 H50 Q48.5 1461.5 50 1459.5 Z" fill="#a29fa8"/>
<rect x="62" y="1433.8" width="19" height="3" fill="#241c2b" transform="skewX(-14) translate(358 0)"/>
<rect x="60.5" y="1440.3" width="19" height="3" fill="#241c2b" transform="skewX(-14) translate(359 0)"/>
<g fill="#a29fa8"><rect x="47" y="1541" width="10" height="5.5"/><rect x="61" y="1541" width="10" height="5.5"/><rect x="74" y="1541" width="9.5" height="5.5"/><rect x="47" y="1555.5" width="10" height="5.5"/><rect x="47" y="1568.5" width="10" height="5.5"/></g>
<circle cx="77" cy="1565" r="12" fill="none" stroke="#a29fa8" stroke-width="4"/>
<path d="M77 1558 A7 7 0 0 1 84 1565 H77 Z" fill="#a29fa8"/>
<line x1="68.5" y1="1574" x2="57.5" y2="1585" stroke="#a29fa8" stroke-width="5" stroke-linecap="round"/>
<circle cx="69.8" cy="1681" r="19" fill="none" stroke="#a29fa8" stroke-width="2.2" stroke-dasharray="4 3"/>
<circle cx="69.8" cy="1661.0" r="3.6" fill="#a29fa8"/>
<circle cx="52.5" cy="1671.0" r="3.6" fill="#a29fa8"/>
<circle cx="52.5" cy="1691.0" r="3.6" fill="#a29fa8"/>
<circle cx="69.8" cy="1701.0" r="3.6" fill="#a29fa8"/>
<circle cx="87.1" cy="1691.0" r="3.6" fill="#a29fa8"/>
<circle cx="87.1" cy="1671.0" r="3.6" fill="#a29fa8"/>
<circle cx="69.8" cy="1681" r="12.5" fill="#a29fa8"/>
<g fill="none" stroke="#1d1424" stroke-width="2"><ellipse cx="69.8" cy="1681" rx="5" ry="12" transform="rotate(25 69.8 1681)"/><path d="M57.8 1683 Q69.8 1675 81.8 1679"/></g>
<circle cx="69.8" cy="1840.9" r="21" fill="#a29fa8"/>
<path d="M62 1834 Q62 1825.5 70 1825.5 Q78.5 1825.5 78.5 1833.5 Q78.5 1838.5 73.5 1840.5 Q72.5 1841.5 72.5 1844 H66.5 Q66.3 1838.5 70.5 1836.5 Q72.5 1835.5 72.5 1833.8 Q72.5 1831.3 70 1831.3 Q67.7 1831.3 67.7 1834 Z" fill="#160d1e"/>
<rect x="66.5" y="1847" width="6" height="5.5" fill="#160d1e"/>
<g fill="#a29fa8"><circle cx="90" cy="1952" r="8.5"/><path d="M82 1962 Q90 1966 98 1962 Q104.3 1965 104.3 1972 V1979.7 H82 Z"/></g>
<path d="M78 1979.7 V1966 Q72 1958 65 1958 Z" fill="#150c1d" opacity="0"/>
<g fill="#a29fa8" stroke="#150c1d" stroke-width="2.5"><circle cx="65.2" cy="1944" r="11.5"/><path d="M46.8 1981 V1972 Q47 1962 56 1959.5 Q65 1963 74.5 1959.5 Q83.5 1962 84 1972 V1981 Z"/></g>
<defs><clipPath id="avc"><circle cx="70.2" cy="2076.8" r="33"/></clipPath></defs>
<g clip-path="url(#avc)"><rect x="36" y="2042" width="70" height="70" fill="#5a7532"/><rect x="36" y="2042" width="70" height="17" fill="#8eb0da"/><ellipse cx="94" cy="2060" rx="13" ry="17" fill="#7c8670"/><rect x="36" y="2057" width="22" height="3" fill="#3a3a40"/><rect x="37" y="2060" width="20" height="15" fill="#e4dba4"/><rect x="46" y="2063" width="3" height="8" fill="#6a6040"/><rect x="80" y="2071" width="24" height="5" fill="#c8ccc0"/><ellipse cx="72" cy="2063" rx="16" ry="11.5" fill="#6e4c30"/><ellipse cx="72" cy="2079" rx="14" ry="17.5" fill="#c49a78"/><rect x="57" y="2071" width="29" height="7" rx="3" fill="#25201e"/><path d="M50 2112 L56 2096 Q71 2104 86 2096 L92 2112 Z" fill="#dcdbe2"/><path d="M38 2112 Q42 2098 55 2094 L58 2112 Z M104 2112 Q100 2098 87 2094 L84 2112 Z" fill="#2b3026"/></g>
</svg>
</body></html>
